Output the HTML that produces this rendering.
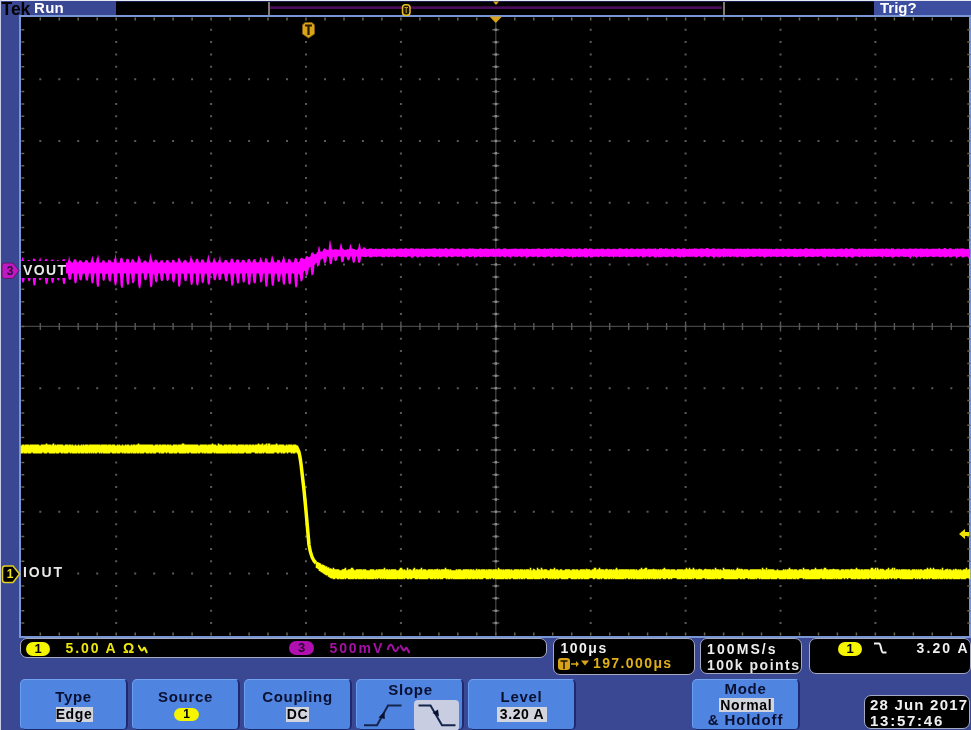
<!DOCTYPE html>
<html><head><meta charset="utf-8">
<style>
*{margin:0;padding:0;box-sizing:border-box}
html,body{width:971px;height:730px;overflow:hidden;background:#3a4894}
body{position:relative;font-family:"Liberation Sans",sans-serif;font-weight:bold}
.a{position:absolute;white-space:nowrap}
svg{position:absolute;left:0;top:0}
.sb{position:absolute;background:#000;border:1.5px solid #a4aac2;border-radius:7px}
.t{position:absolute;white-space:nowrap;font-size:14px;line-height:16px}
.btn{position:absolute;top:679px;height:51px;width:108px;background:#5084e1;border-radius:5px;border-top:1.5px solid #72a4f2;border-left:1px solid #68a0f4;border-right:2px solid #1e2a6e;border-bottom:1px solid #1c2a6a}
.bt{position:absolute;white-space:nowrap;font-size:15px;line-height:16px;color:#0a1030;text-align:center;letter-spacing:0.7px}
.hl{position:absolute;background:#d2d4de;color:#000;font-size:14px;line-height:15px;text-align:center;letter-spacing:0.6px}
</style></head><body><div id="wrap" style="position:absolute;left:0;top:0;width:971px;height:730px;overflow:hidden;filter:blur(0.6px)">
<div class="a" style="left:0;top:0;width:971px;height:1px;background:#e6e8f2"></div>
<div class="a" style="left:0;top:0;width:1px;height:730px;background:#c8cce4"></div>
<div class="a" style="left:116px;top:1px;width:758px;height:14px;background:#000;border-top:1px solid #1a2050"></div>
<div class="a" style="left:874px;top:1px;width:97px;height:14px;background:#3d4ea0"></div>
<div class="a" style="left:19px;top:15px;width:952px;height:623px;background:#000;border:2px solid #7896d4"></div>
<div class="a" style="left:1.5px;top:-1.5px;font-weight:bold;font-size:17.5px;line-height:20px;color:#000;letter-spacing:0px">Tek</div>
<div class="t" style="left:34px;top:0px;font-size:15px;color:#fff;letter-spacing:0.3px">Run</div>
<div class="t" style="left:880px;top:0px;font-size:15px;color:#fff">Trig?</div>

<svg width="971" height="730" viewBox="0 0 971 730">
<!-- record bar -->
<rect x="270" y="6.3" width="452" height="2.7" fill="#4c0c5c"/>
<path d="M269 2V15 M724 2V15" stroke="#a09a8c" stroke-width="1.6"/>
<path d="M493 1.5H499L496 5Z" fill="#e0a818"/>
<path d="M115.2 28.8h2v2h-2zM115.2 41.1h2v2h-2zM115.2 53.5h2v2h-2zM115.2 65.8h2v2h-2zM115.2 78.2h2v2h-2zM115.2 90.6h2v2h-2zM115.2 102.9h2v2h-2zM115.2 115.3h2v2h-2zM115.2 127.6h2v2h-2zM115.2 140h2v2h-2zM115.2 152.4h2v2h-2zM115.2 164.7h2v2h-2zM115.2 177.1h2v2h-2zM115.2 189.4h2v2h-2zM115.2 201.8h2v2h-2zM115.2 214.2h2v2h-2zM115.2 226.5h2v2h-2zM115.2 238.9h2v2h-2zM115.2 251.2h2v2h-2zM115.2 263.6h2v2h-2zM115.2 276h2v2h-2zM115.2 288.3h2v2h-2zM115.2 300.7h2v2h-2zM115.2 313h2v2h-2zM115.2 325.4h2v2h-2zM115.2 337.8h2v2h-2zM115.2 350.1h2v2h-2zM115.2 362.5h2v2h-2zM115.2 374.8h2v2h-2zM115.2 387.2h2v2h-2zM115.2 399.6h2v2h-2zM115.2 411.9h2v2h-2zM115.2 424.3h2v2h-2zM115.2 436.6h2v2h-2zM115.2 449h2v2h-2zM115.2 461.4h2v2h-2zM115.2 473.7h2v2h-2zM115.2 486.1h2v2h-2zM115.2 498.4h2v2h-2zM115.2 510.8h2v2h-2zM115.2 523.2h2v2h-2zM115.2 535.5h2v2h-2zM115.2 547.9h2v2h-2zM115.2 560.2h2v2h-2zM115.2 572.6h2v2h-2zM115.2 585h2v2h-2zM115.2 597.3h2v2h-2zM115.2 609.7h2v2h-2zM115.2 622h2v2h-2zM210.1 28.8h2v2h-2zM210.1 41.1h2v2h-2zM210.1 53.5h2v2h-2zM210.1 65.8h2v2h-2zM210.1 78.2h2v2h-2zM210.1 90.6h2v2h-2zM210.1 102.9h2v2h-2zM210.1 115.3h2v2h-2zM210.1 127.6h2v2h-2zM210.1 140h2v2h-2zM210.1 152.4h2v2h-2zM210.1 164.7h2v2h-2zM210.1 177.1h2v2h-2zM210.1 189.4h2v2h-2zM210.1 201.8h2v2h-2zM210.1 214.2h2v2h-2zM210.1 226.5h2v2h-2zM210.1 238.9h2v2h-2zM210.1 251.2h2v2h-2zM210.1 263.6h2v2h-2zM210.1 276h2v2h-2zM210.1 288.3h2v2h-2zM210.1 300.7h2v2h-2zM210.1 313h2v2h-2zM210.1 325.4h2v2h-2zM210.1 337.8h2v2h-2zM210.1 350.1h2v2h-2zM210.1 362.5h2v2h-2zM210.1 374.8h2v2h-2zM210.1 387.2h2v2h-2zM210.1 399.6h2v2h-2zM210.1 411.9h2v2h-2zM210.1 424.3h2v2h-2zM210.1 436.6h2v2h-2zM210.1 449h2v2h-2zM210.1 461.4h2v2h-2zM210.1 473.7h2v2h-2zM210.1 486.1h2v2h-2zM210.1 498.4h2v2h-2zM210.1 510.8h2v2h-2zM210.1 523.2h2v2h-2zM210.1 535.5h2v2h-2zM210.1 547.9h2v2h-2zM210.1 560.2h2v2h-2zM210.1 572.6h2v2h-2zM210.1 585h2v2h-2zM210.1 597.3h2v2h-2zM210.1 609.7h2v2h-2zM210.1 622h2v2h-2zM305 28.8h2v2h-2zM305 41.1h2v2h-2zM305 53.5h2v2h-2zM305 65.8h2v2h-2zM305 78.2h2v2h-2zM305 90.6h2v2h-2zM305 102.9h2v2h-2zM305 115.3h2v2h-2zM305 127.6h2v2h-2zM305 140h2v2h-2zM305 152.4h2v2h-2zM305 164.7h2v2h-2zM305 177.1h2v2h-2zM305 189.4h2v2h-2zM305 201.8h2v2h-2zM305 214.2h2v2h-2zM305 226.5h2v2h-2zM305 238.9h2v2h-2zM305 251.2h2v2h-2zM305 263.6h2v2h-2zM305 276h2v2h-2zM305 288.3h2v2h-2zM305 300.7h2v2h-2zM305 313h2v2h-2zM305 325.4h2v2h-2zM305 337.8h2v2h-2zM305 350.1h2v2h-2zM305 362.5h2v2h-2zM305 374.8h2v2h-2zM305 387.2h2v2h-2zM305 399.6h2v2h-2zM305 411.9h2v2h-2zM305 424.3h2v2h-2zM305 436.6h2v2h-2zM305 449h2v2h-2zM305 461.4h2v2h-2zM305 473.7h2v2h-2zM305 486.1h2v2h-2zM305 498.4h2v2h-2zM305 510.8h2v2h-2zM305 523.2h2v2h-2zM305 535.5h2v2h-2zM305 547.9h2v2h-2zM305 560.2h2v2h-2zM305 572.6h2v2h-2zM305 585h2v2h-2zM305 597.3h2v2h-2zM305 609.7h2v2h-2zM305 622h2v2h-2zM399.9 28.8h2v2h-2zM399.9 41.1h2v2h-2zM399.9 53.5h2v2h-2zM399.9 65.8h2v2h-2zM399.9 78.2h2v2h-2zM399.9 90.6h2v2h-2zM399.9 102.9h2v2h-2zM399.9 115.3h2v2h-2zM399.9 127.6h2v2h-2zM399.9 140h2v2h-2zM399.9 152.4h2v2h-2zM399.9 164.7h2v2h-2zM399.9 177.1h2v2h-2zM399.9 189.4h2v2h-2zM399.9 201.8h2v2h-2zM399.9 214.2h2v2h-2zM399.9 226.5h2v2h-2zM399.9 238.9h2v2h-2zM399.9 251.2h2v2h-2zM399.9 263.6h2v2h-2zM399.9 276h2v2h-2zM399.9 288.3h2v2h-2zM399.9 300.7h2v2h-2zM399.9 313h2v2h-2zM399.9 325.4h2v2h-2zM399.9 337.8h2v2h-2zM399.9 350.1h2v2h-2zM399.9 362.5h2v2h-2zM399.9 374.8h2v2h-2zM399.9 387.2h2v2h-2zM399.9 399.6h2v2h-2zM399.9 411.9h2v2h-2zM399.9 424.3h2v2h-2zM399.9 436.6h2v2h-2zM399.9 449h2v2h-2zM399.9 461.4h2v2h-2zM399.9 473.7h2v2h-2zM399.9 486.1h2v2h-2zM399.9 498.4h2v2h-2zM399.9 510.8h2v2h-2zM399.9 523.2h2v2h-2zM399.9 535.5h2v2h-2zM399.9 547.9h2v2h-2zM399.9 560.2h2v2h-2zM399.9 572.6h2v2h-2zM399.9 585h2v2h-2zM399.9 597.3h2v2h-2zM399.9 609.7h2v2h-2zM399.9 622h2v2h-2zM589.7 28.8h2v2h-2zM589.7 41.1h2v2h-2zM589.7 53.5h2v2h-2zM589.7 65.8h2v2h-2zM589.7 78.2h2v2h-2zM589.7 90.6h2v2h-2zM589.7 102.9h2v2h-2zM589.7 115.3h2v2h-2zM589.7 127.6h2v2h-2zM589.7 140h2v2h-2zM589.7 152.4h2v2h-2zM589.7 164.7h2v2h-2zM589.7 177.1h2v2h-2zM589.7 189.4h2v2h-2zM589.7 201.8h2v2h-2zM589.7 214.2h2v2h-2zM589.7 226.5h2v2h-2zM589.7 238.9h2v2h-2zM589.7 251.2h2v2h-2zM589.7 263.6h2v2h-2zM589.7 276h2v2h-2zM589.7 288.3h2v2h-2zM589.7 300.7h2v2h-2zM589.7 313h2v2h-2zM589.7 325.4h2v2h-2zM589.7 337.8h2v2h-2zM589.7 350.1h2v2h-2zM589.7 362.5h2v2h-2zM589.7 374.8h2v2h-2zM589.7 387.2h2v2h-2zM589.7 399.6h2v2h-2zM589.7 411.9h2v2h-2zM589.7 424.3h2v2h-2zM589.7 436.6h2v2h-2zM589.7 449h2v2h-2zM589.7 461.4h2v2h-2zM589.7 473.7h2v2h-2zM589.7 486.1h2v2h-2zM589.7 498.4h2v2h-2zM589.7 510.8h2v2h-2zM589.7 523.2h2v2h-2zM589.7 535.5h2v2h-2zM589.7 547.9h2v2h-2zM589.7 560.2h2v2h-2zM589.7 572.6h2v2h-2zM589.7 585h2v2h-2zM589.7 597.3h2v2h-2zM589.7 609.7h2v2h-2zM589.7 622h2v2h-2zM684.6 28.8h2v2h-2zM684.6 41.1h2v2h-2zM684.6 53.5h2v2h-2zM684.6 65.8h2v2h-2zM684.6 78.2h2v2h-2zM684.6 90.6h2v2h-2zM684.6 102.9h2v2h-2zM684.6 115.3h2v2h-2zM684.6 127.6h2v2h-2zM684.6 140h2v2h-2zM684.6 152.4h2v2h-2zM684.6 164.7h2v2h-2zM684.6 177.1h2v2h-2zM684.6 189.4h2v2h-2zM684.6 201.8h2v2h-2zM684.6 214.2h2v2h-2zM684.6 226.5h2v2h-2zM684.6 238.9h2v2h-2zM684.6 251.2h2v2h-2zM684.6 263.6h2v2h-2zM684.6 276h2v2h-2zM684.6 288.3h2v2h-2zM684.6 300.7h2v2h-2zM684.6 313h2v2h-2zM684.6 325.4h2v2h-2zM684.6 337.8h2v2h-2zM684.6 350.1h2v2h-2zM684.6 362.5h2v2h-2zM684.6 374.8h2v2h-2zM684.6 387.2h2v2h-2zM684.6 399.6h2v2h-2zM684.6 411.9h2v2h-2zM684.6 424.3h2v2h-2zM684.6 436.6h2v2h-2zM684.6 449h2v2h-2zM684.6 461.4h2v2h-2zM684.6 473.7h2v2h-2zM684.6 486.1h2v2h-2zM684.6 498.4h2v2h-2zM684.6 510.8h2v2h-2zM684.6 523.2h2v2h-2zM684.6 535.5h2v2h-2zM684.6 547.9h2v2h-2zM684.6 560.2h2v2h-2zM684.6 572.6h2v2h-2zM684.6 585h2v2h-2zM684.6 597.3h2v2h-2zM684.6 609.7h2v2h-2zM684.6 622h2v2h-2zM779.5 28.8h2v2h-2zM779.5 41.1h2v2h-2zM779.5 53.5h2v2h-2zM779.5 65.8h2v2h-2zM779.5 78.2h2v2h-2zM779.5 90.6h2v2h-2zM779.5 102.9h2v2h-2zM779.5 115.3h2v2h-2zM779.5 127.6h2v2h-2zM779.5 140h2v2h-2zM779.5 152.4h2v2h-2zM779.5 164.7h2v2h-2zM779.5 177.1h2v2h-2zM779.5 189.4h2v2h-2zM779.5 201.8h2v2h-2zM779.5 214.2h2v2h-2zM779.5 226.5h2v2h-2zM779.5 238.9h2v2h-2zM779.5 251.2h2v2h-2zM779.5 263.6h2v2h-2zM779.5 276h2v2h-2zM779.5 288.3h2v2h-2zM779.5 300.7h2v2h-2zM779.5 313h2v2h-2zM779.5 325.4h2v2h-2zM779.5 337.8h2v2h-2zM779.5 350.1h2v2h-2zM779.5 362.5h2v2h-2zM779.5 374.8h2v2h-2zM779.5 387.2h2v2h-2zM779.5 399.6h2v2h-2zM779.5 411.9h2v2h-2zM779.5 424.3h2v2h-2zM779.5 436.6h2v2h-2zM779.5 449h2v2h-2zM779.5 461.4h2v2h-2zM779.5 473.7h2v2h-2zM779.5 486.1h2v2h-2zM779.5 498.4h2v2h-2zM779.5 510.8h2v2h-2zM779.5 523.2h2v2h-2zM779.5 535.5h2v2h-2zM779.5 547.9h2v2h-2zM779.5 560.2h2v2h-2zM779.5 572.6h2v2h-2zM779.5 585h2v2h-2zM779.5 597.3h2v2h-2zM779.5 609.7h2v2h-2zM779.5 622h2v2h-2zM874.4 28.8h2v2h-2zM874.4 41.1h2v2h-2zM874.4 53.5h2v2h-2zM874.4 65.8h2v2h-2zM874.4 78.2h2v2h-2zM874.4 90.6h2v2h-2zM874.4 102.9h2v2h-2zM874.4 115.3h2v2h-2zM874.4 127.6h2v2h-2zM874.4 140h2v2h-2zM874.4 152.4h2v2h-2zM874.4 164.7h2v2h-2zM874.4 177.1h2v2h-2zM874.4 189.4h2v2h-2zM874.4 201.8h2v2h-2zM874.4 214.2h2v2h-2zM874.4 226.5h2v2h-2zM874.4 238.9h2v2h-2zM874.4 251.2h2v2h-2zM874.4 263.6h2v2h-2zM874.4 276h2v2h-2zM874.4 288.3h2v2h-2zM874.4 300.7h2v2h-2zM874.4 313h2v2h-2zM874.4 325.4h2v2h-2zM874.4 337.8h2v2h-2zM874.4 350.1h2v2h-2zM874.4 362.5h2v2h-2zM874.4 374.8h2v2h-2zM874.4 387.2h2v2h-2zM874.4 399.6h2v2h-2zM874.4 411.9h2v2h-2zM874.4 424.3h2v2h-2zM874.4 436.6h2v2h-2zM874.4 449h2v2h-2zM874.4 461.4h2v2h-2zM874.4 473.7h2v2h-2zM874.4 486.1h2v2h-2zM874.4 498.4h2v2h-2zM874.4 510.8h2v2h-2zM874.4 523.2h2v2h-2zM874.4 535.5h2v2h-2zM874.4 547.9h2v2h-2zM874.4 560.2h2v2h-2zM874.4 572.6h2v2h-2zM874.4 585h2v2h-2zM874.4 597.3h2v2h-2zM874.4 609.7h2v2h-2zM874.4 622h2v2h-2zM39.3 78.2h2v2h-2zM58.3 78.2h2v2h-2zM77.2 78.2h2v2h-2zM96.2 78.2h2v2h-2zM134.2 78.2h2v2h-2zM153.2 78.2h2v2h-2zM172.1 78.2h2v2h-2zM191.1 78.2h2v2h-2zM229.1 78.2h2v2h-2zM248.1 78.2h2v2h-2zM267 78.2h2v2h-2zM286 78.2h2v2h-2zM324 78.2h2v2h-2zM343 78.2h2v2h-2zM361.9 78.2h2v2h-2zM380.9 78.2h2v2h-2zM418.9 78.2h2v2h-2zM437.9 78.2h2v2h-2zM456.8 78.2h2v2h-2zM475.8 78.2h2v2h-2zM513.8 78.2h2v2h-2zM532.8 78.2h2v2h-2zM551.7 78.2h2v2h-2zM570.7 78.2h2v2h-2zM608.7 78.2h2v2h-2zM627.7 78.2h2v2h-2zM646.6 78.2h2v2h-2zM665.6 78.2h2v2h-2zM703.6 78.2h2v2h-2zM722.6 78.2h2v2h-2zM741.5 78.2h2v2h-2zM760.5 78.2h2v2h-2zM798.5 78.2h2v2h-2zM817.5 78.2h2v2h-2zM836.4 78.2h2v2h-2zM855.4 78.2h2v2h-2zM893.4 78.2h2v2h-2zM912.4 78.2h2v2h-2zM931.3 78.2h2v2h-2zM950.3 78.2h2v2h-2zM39.3 140h2v2h-2zM58.3 140h2v2h-2zM77.2 140h2v2h-2zM96.2 140h2v2h-2zM134.2 140h2v2h-2zM153.2 140h2v2h-2zM172.1 140h2v2h-2zM191.1 140h2v2h-2zM229.1 140h2v2h-2zM248.1 140h2v2h-2zM267 140h2v2h-2zM286 140h2v2h-2zM324 140h2v2h-2zM343 140h2v2h-2zM361.9 140h2v2h-2zM380.9 140h2v2h-2zM418.9 140h2v2h-2zM437.9 140h2v2h-2zM456.8 140h2v2h-2zM475.8 140h2v2h-2zM513.8 140h2v2h-2zM532.8 140h2v2h-2zM551.7 140h2v2h-2zM570.7 140h2v2h-2zM608.7 140h2v2h-2zM627.7 140h2v2h-2zM646.6 140h2v2h-2zM665.6 140h2v2h-2zM703.6 140h2v2h-2zM722.6 140h2v2h-2zM741.5 140h2v2h-2zM760.5 140h2v2h-2zM798.5 140h2v2h-2zM817.5 140h2v2h-2zM836.4 140h2v2h-2zM855.4 140h2v2h-2zM893.4 140h2v2h-2zM912.4 140h2v2h-2zM931.3 140h2v2h-2zM950.3 140h2v2h-2zM39.3 201.8h2v2h-2zM58.3 201.8h2v2h-2zM77.2 201.8h2v2h-2zM96.2 201.8h2v2h-2zM134.2 201.8h2v2h-2zM153.2 201.8h2v2h-2zM172.1 201.8h2v2h-2zM191.1 201.8h2v2h-2zM229.1 201.8h2v2h-2zM248.1 201.8h2v2h-2zM267 201.8h2v2h-2zM286 201.8h2v2h-2zM324 201.8h2v2h-2zM343 201.8h2v2h-2zM361.9 201.8h2v2h-2zM380.9 201.8h2v2h-2zM418.9 201.8h2v2h-2zM437.9 201.8h2v2h-2zM456.8 201.8h2v2h-2zM475.8 201.8h2v2h-2zM513.8 201.8h2v2h-2zM532.8 201.8h2v2h-2zM551.7 201.8h2v2h-2zM570.7 201.8h2v2h-2zM608.7 201.8h2v2h-2zM627.7 201.8h2v2h-2zM646.6 201.8h2v2h-2zM665.6 201.8h2v2h-2zM703.6 201.8h2v2h-2zM722.6 201.8h2v2h-2zM741.5 201.8h2v2h-2zM760.5 201.8h2v2h-2zM798.5 201.8h2v2h-2zM817.5 201.8h2v2h-2zM836.4 201.8h2v2h-2zM855.4 201.8h2v2h-2zM893.4 201.8h2v2h-2zM912.4 201.8h2v2h-2zM931.3 201.8h2v2h-2zM950.3 201.8h2v2h-2zM39.3 263.6h2v2h-2zM58.3 263.6h2v2h-2zM77.2 263.6h2v2h-2zM96.2 263.6h2v2h-2zM134.2 263.6h2v2h-2zM153.2 263.6h2v2h-2zM172.1 263.6h2v2h-2zM191.1 263.6h2v2h-2zM229.1 263.6h2v2h-2zM248.1 263.6h2v2h-2zM267 263.6h2v2h-2zM286 263.6h2v2h-2zM324 263.6h2v2h-2zM343 263.6h2v2h-2zM361.9 263.6h2v2h-2zM380.9 263.6h2v2h-2zM418.9 263.6h2v2h-2zM437.9 263.6h2v2h-2zM456.8 263.6h2v2h-2zM475.8 263.6h2v2h-2zM513.8 263.6h2v2h-2zM532.8 263.6h2v2h-2zM551.7 263.6h2v2h-2zM570.7 263.6h2v2h-2zM608.7 263.6h2v2h-2zM627.7 263.6h2v2h-2zM646.6 263.6h2v2h-2zM665.6 263.6h2v2h-2zM703.6 263.6h2v2h-2zM722.6 263.6h2v2h-2zM741.5 263.6h2v2h-2zM760.5 263.6h2v2h-2zM798.5 263.6h2v2h-2zM817.5 263.6h2v2h-2zM836.4 263.6h2v2h-2zM855.4 263.6h2v2h-2zM893.4 263.6h2v2h-2zM912.4 263.6h2v2h-2zM931.3 263.6h2v2h-2zM950.3 263.6h2v2h-2zM39.3 387.2h2v2h-2zM58.3 387.2h2v2h-2zM77.2 387.2h2v2h-2zM96.2 387.2h2v2h-2zM134.2 387.2h2v2h-2zM153.2 387.2h2v2h-2zM172.1 387.2h2v2h-2zM191.1 387.2h2v2h-2zM229.1 387.2h2v2h-2zM248.1 387.2h2v2h-2zM267 387.2h2v2h-2zM286 387.2h2v2h-2zM324 387.2h2v2h-2zM343 387.2h2v2h-2zM361.9 387.2h2v2h-2zM380.9 387.2h2v2h-2zM418.9 387.2h2v2h-2zM437.9 387.2h2v2h-2zM456.8 387.2h2v2h-2zM475.8 387.2h2v2h-2zM513.8 387.2h2v2h-2zM532.8 387.2h2v2h-2zM551.7 387.2h2v2h-2zM570.7 387.2h2v2h-2zM608.7 387.2h2v2h-2zM627.7 387.2h2v2h-2zM646.6 387.2h2v2h-2zM665.6 387.2h2v2h-2zM703.6 387.2h2v2h-2zM722.6 387.2h2v2h-2zM741.5 387.2h2v2h-2zM760.5 387.2h2v2h-2zM798.5 387.2h2v2h-2zM817.5 387.2h2v2h-2zM836.4 387.2h2v2h-2zM855.4 387.2h2v2h-2zM893.4 387.2h2v2h-2zM912.4 387.2h2v2h-2zM931.3 387.2h2v2h-2zM950.3 387.2h2v2h-2zM39.3 449h2v2h-2zM58.3 449h2v2h-2zM77.2 449h2v2h-2zM96.2 449h2v2h-2zM134.2 449h2v2h-2zM153.2 449h2v2h-2zM172.1 449h2v2h-2zM191.1 449h2v2h-2zM229.1 449h2v2h-2zM248.1 449h2v2h-2zM267 449h2v2h-2zM286 449h2v2h-2zM324 449h2v2h-2zM343 449h2v2h-2zM361.9 449h2v2h-2zM380.9 449h2v2h-2zM418.9 449h2v2h-2zM437.9 449h2v2h-2zM456.8 449h2v2h-2zM475.8 449h2v2h-2zM513.8 449h2v2h-2zM532.8 449h2v2h-2zM551.7 449h2v2h-2zM570.7 449h2v2h-2zM608.7 449h2v2h-2zM627.7 449h2v2h-2zM646.6 449h2v2h-2zM665.6 449h2v2h-2zM703.6 449h2v2h-2zM722.6 449h2v2h-2zM741.5 449h2v2h-2zM760.5 449h2v2h-2zM798.5 449h2v2h-2zM817.5 449h2v2h-2zM836.4 449h2v2h-2zM855.4 449h2v2h-2zM893.4 449h2v2h-2zM912.4 449h2v2h-2zM931.3 449h2v2h-2zM950.3 449h2v2h-2zM39.3 510.8h2v2h-2zM58.3 510.8h2v2h-2zM77.2 510.8h2v2h-2zM96.2 510.8h2v2h-2zM134.2 510.8h2v2h-2zM153.2 510.8h2v2h-2zM172.1 510.8h2v2h-2zM191.1 510.8h2v2h-2zM229.1 510.8h2v2h-2zM248.1 510.8h2v2h-2zM267 510.8h2v2h-2zM286 510.8h2v2h-2zM324 510.8h2v2h-2zM343 510.8h2v2h-2zM361.9 510.8h2v2h-2zM380.9 510.8h2v2h-2zM418.9 510.8h2v2h-2zM437.9 510.8h2v2h-2zM456.8 510.8h2v2h-2zM475.8 510.8h2v2h-2zM513.8 510.8h2v2h-2zM532.8 510.8h2v2h-2zM551.7 510.8h2v2h-2zM570.7 510.8h2v2h-2zM608.7 510.8h2v2h-2zM627.7 510.8h2v2h-2zM646.6 510.8h2v2h-2zM665.6 510.8h2v2h-2zM703.6 510.8h2v2h-2zM722.6 510.8h2v2h-2zM741.5 510.8h2v2h-2zM760.5 510.8h2v2h-2zM798.5 510.8h2v2h-2zM817.5 510.8h2v2h-2zM836.4 510.8h2v2h-2zM855.4 510.8h2v2h-2zM893.4 510.8h2v2h-2zM912.4 510.8h2v2h-2zM931.3 510.8h2v2h-2zM950.3 510.8h2v2h-2zM39.3 572.6h2v2h-2zM58.3 572.6h2v2h-2zM77.2 572.6h2v2h-2zM96.2 572.6h2v2h-2zM134.2 572.6h2v2h-2zM153.2 572.6h2v2h-2zM172.1 572.6h2v2h-2zM191.1 572.6h2v2h-2zM229.1 572.6h2v2h-2zM248.1 572.6h2v2h-2zM267 572.6h2v2h-2zM286 572.6h2v2h-2zM324 572.6h2v2h-2zM343 572.6h2v2h-2zM361.9 572.6h2v2h-2zM380.9 572.6h2v2h-2zM418.9 572.6h2v2h-2zM437.9 572.6h2v2h-2zM456.8 572.6h2v2h-2zM475.8 572.6h2v2h-2zM513.8 572.6h2v2h-2zM532.8 572.6h2v2h-2zM551.7 572.6h2v2h-2zM570.7 572.6h2v2h-2zM608.7 572.6h2v2h-2zM627.7 572.6h2v2h-2zM646.6 572.6h2v2h-2zM665.6 572.6h2v2h-2zM703.6 572.6h2v2h-2zM722.6 572.6h2v2h-2zM741.5 572.6h2v2h-2zM760.5 572.6h2v2h-2zM798.5 572.6h2v2h-2zM817.5 572.6h2v2h-2zM836.4 572.6h2v2h-2zM855.4 572.6h2v2h-2zM893.4 572.6h2v2h-2zM912.4 572.6h2v2h-2zM931.3 572.6h2v2h-2zM950.3 572.6h2v2h-2z" fill="#5a5a5a"/>
<path d="M495.8 17.4V635.4 M21.3 326.4H970.3" stroke="#444" stroke-width="1.3" fill="none"/>
<path d="M492.3 29.8h7M492.3 42.1h7M492.3 54.5h7M492.3 66.8h7M490.8 79.2h10M492.3 91.6h7M492.3 103.9h7M492.3 116.3h7M492.3 128.6h7M490.8 141h10M492.3 153.4h7M492.3 165.7h7M492.3 178.1h7M492.3 190.4h7M490.8 202.8h10M492.3 215.2h7M492.3 227.5h7M492.3 239.9h7M492.3 252.2h7M490.8 264.6h10M492.3 277h7M492.3 289.3h7M492.3 301.7h7M492.3 314h7M490.8 326.4h10M492.3 338.8h7M492.3 351.1h7M492.3 363.5h7M492.3 375.8h7M490.8 388.2h10M492.3 400.6h7M492.3 412.9h7M492.3 425.3h7M492.3 437.6h7M490.8 450h10M492.3 462.4h7M492.3 474.7h7M492.3 487.1h7M492.3 499.4h7M490.8 511.8h10M492.3 524.2h7M492.3 536.5h7M492.3 548.9h7M492.3 561.2h7M490.8 573.6h10M492.3 586h7M492.3 598.3h7M492.3 610.7h7M492.3 623h7M40.3 322.9v7M59.3 322.9v7M78.2 322.9v7M97.2 322.9v7M116.2 321.4v10M135.2 322.9v7M154.2 322.9v7M173.1 322.9v7M192.1 322.9v7M211.1 321.4v10M230.1 322.9v7M249.1 322.9v7M268 322.9v7M287 322.9v7M306 321.4v10M325 322.9v7M344 322.9v7M362.9 322.9v7M381.9 322.9v7M400.9 321.4v10M419.9 322.9v7M438.9 322.9v7M457.8 322.9v7M476.8 322.9v7M495.8 321.4v10M514.8 322.9v7M533.8 322.9v7M552.7 322.9v7M571.7 322.9v7M590.7 321.4v10M609.7 322.9v7M628.7 322.9v7M647.6 322.9v7M666.6 322.9v7M685.6 321.4v10M704.6 322.9v7M723.6 322.9v7M742.5 322.9v7M761.5 322.9v7M780.5 321.4v10M799.5 322.9v7M818.5 322.9v7M837.4 322.9v7M856.4 322.9v7M875.4 321.4v10M894.4 322.9v7M913.4 322.9v7M932.3 322.9v7M951.3 322.9v7" stroke="#585858" stroke-width="1.4" fill="none"/>
<path d="M40.3 17.4v3M40.3 635.4v-3M59.3 17.4v3M59.3 635.4v-3M78.2 17.4v3M78.2 635.4v-3M97.2 17.4v3M97.2 635.4v-3M116.2 17.4v3M116.2 635.4v-3M135.2 17.4v3M135.2 635.4v-3M154.2 17.4v3M154.2 635.4v-3M173.1 17.4v3M173.1 635.4v-3M192.1 17.4v3M192.1 635.4v-3M211.1 17.4v3M211.1 635.4v-3M230.1 17.4v3M230.1 635.4v-3M249.1 17.4v3M249.1 635.4v-3M268 17.4v3M268 635.4v-3M287 17.4v3M287 635.4v-3M306 17.4v3M306 635.4v-3M325 17.4v3M325 635.4v-3M344 17.4v3M344 635.4v-3M362.9 17.4v3M362.9 635.4v-3M381.9 17.4v3M381.9 635.4v-3M400.9 17.4v3M400.9 635.4v-3M419.9 17.4v3M419.9 635.4v-3M438.9 17.4v3M438.9 635.4v-3M457.8 17.4v3M457.8 635.4v-3M476.8 17.4v3M476.8 635.4v-3M495.8 17.4v3M495.8 635.4v-3M514.8 17.4v3M514.8 635.4v-3M533.8 17.4v3M533.8 635.4v-3M552.7 17.4v3M552.7 635.4v-3M571.7 17.4v3M571.7 635.4v-3M590.7 17.4v3M590.7 635.4v-3M609.7 17.4v3M609.7 635.4v-3M628.7 17.4v3M628.7 635.4v-3M647.6 17.4v3M647.6 635.4v-3M666.6 17.4v3M666.6 635.4v-3M685.6 17.4v3M685.6 635.4v-3M704.6 17.4v3M704.6 635.4v-3M723.6 17.4v3M723.6 635.4v-3M742.5 17.4v3M742.5 635.4v-3M761.5 17.4v3M761.5 635.4v-3M780.5 17.4v3M780.5 635.4v-3M799.5 17.4v3M799.5 635.4v-3M818.5 17.4v3M818.5 635.4v-3M837.4 17.4v3M837.4 635.4v-3M856.4 17.4v3M856.4 635.4v-3M875.4 17.4v3M875.4 635.4v-3M894.4 17.4v3M894.4 635.4v-3M913.4 17.4v3M913.4 635.4v-3M932.3 17.4v3M932.3 635.4v-3M951.3 17.4v3M951.3 635.4v-3M21.3 29.8h3M970.3 29.8h-3M21.3 42.1h3M970.3 42.1h-3M21.3 54.5h3M970.3 54.5h-3M21.3 66.8h3M970.3 66.8h-3M21.3 79.2h3M970.3 79.2h-3M21.3 91.6h3M970.3 91.6h-3M21.3 103.9h3M970.3 103.9h-3M21.3 116.3h3M970.3 116.3h-3M21.3 128.6h3M970.3 128.6h-3M21.3 141h3M970.3 141h-3M21.3 153.4h3M970.3 153.4h-3M21.3 165.7h3M970.3 165.7h-3M21.3 178.1h3M970.3 178.1h-3M21.3 190.4h3M970.3 190.4h-3M21.3 202.8h3M970.3 202.8h-3M21.3 215.2h3M970.3 215.2h-3M21.3 227.5h3M970.3 227.5h-3M21.3 239.9h3M970.3 239.9h-3M21.3 252.2h3M970.3 252.2h-3M21.3 264.6h3M970.3 264.6h-3M21.3 277h3M970.3 277h-3M21.3 289.3h3M970.3 289.3h-3M21.3 301.7h3M970.3 301.7h-3M21.3 314h3M970.3 314h-3M21.3 326.4h3M970.3 326.4h-3M21.3 338.8h3M970.3 338.8h-3M21.3 351.1h3M970.3 351.1h-3M21.3 363.5h3M970.3 363.5h-3M21.3 375.8h3M970.3 375.8h-3M21.3 388.2h3M970.3 388.2h-3M21.3 400.6h3M970.3 400.6h-3M21.3 412.9h3M970.3 412.9h-3M21.3 425.3h3M970.3 425.3h-3M21.3 437.6h3M970.3 437.6h-3M21.3 450h3M970.3 450h-3M21.3 462.4h3M970.3 462.4h-3M21.3 474.7h3M970.3 474.7h-3M21.3 487.1h3M970.3 487.1h-3M21.3 499.4h3M970.3 499.4h-3M21.3 511.8h3M970.3 511.8h-3M21.3 524.2h3M970.3 524.2h-3M21.3 536.5h3M970.3 536.5h-3M21.3 548.9h3M970.3 548.9h-3M21.3 561.2h3M970.3 561.2h-3M21.3 573.6h3M970.3 573.6h-3M21.3 586h3M970.3 586h-3M21.3 598.3h3M970.3 598.3h-3M21.3 610.7h3M970.3 610.7h-3M21.3 623h3M970.3 623h-3" stroke="#6a6650" stroke-width="1.5" fill="none"/>
<path d="M494.6 28.5h2.5v2.5h-2.5zM494.6 40.9h2.5v2.5h-2.5zM494.6 53.2h2.5v2.5h-2.5zM494.6 65.6h2.5v2.5h-2.5zM494.6 77.9h2.5v2.5h-2.5zM494.6 90.3h2.5v2.5h-2.5zM494.6 102.7h2.5v2.5h-2.5zM494.6 115h2.5v2.5h-2.5zM494.6 127.4h2.5v2.5h-2.5zM494.6 139.7h2.5v2.5h-2.5zM494.6 152.1h2.5v2.5h-2.5zM494.6 164.5h2.5v2.5h-2.5zM494.6 176.8h2.5v2.5h-2.5zM494.6 189.2h2.5v2.5h-2.5zM494.6 201.5h2.5v2.5h-2.5zM494.6 213.9h2.5v2.5h-2.5zM494.6 226.3h2.5v2.5h-2.5zM494.6 238.6h2.5v2.5h-2.5zM494.6 251h2.5v2.5h-2.5zM494.6 263.3h2.5v2.5h-2.5zM494.6 275.7h2.5v2.5h-2.5zM494.6 288.1h2.5v2.5h-2.5zM494.6 300.4h2.5v2.5h-2.5zM494.6 312.8h2.5v2.5h-2.5zM494.6 325.1h2.5v2.5h-2.5zM494.6 337.5h2.5v2.5h-2.5zM494.6 349.9h2.5v2.5h-2.5zM494.6 362.2h2.5v2.5h-2.5zM494.6 374.6h2.5v2.5h-2.5zM494.6 386.9h2.5v2.5h-2.5zM494.6 399.3h2.5v2.5h-2.5zM494.6 411.7h2.5v2.5h-2.5zM494.6 424h2.5v2.5h-2.5zM494.6 436.4h2.5v2.5h-2.5zM494.6 448.8h2.5v2.5h-2.5zM494.6 461.1h2.5v2.5h-2.5zM494.6 473.5h2.5v2.5h-2.5zM494.6 485.8h2.5v2.5h-2.5zM494.6 498.2h2.5v2.5h-2.5zM494.6 510.5h2.5v2.5h-2.5zM494.6 522.9h2.5v2.5h-2.5zM494.6 535.3h2.5v2.5h-2.5zM494.6 547.6h2.5v2.5h-2.5zM494.6 560h2.5v2.5h-2.5zM494.6 572.4h2.5v2.5h-2.5zM494.6 584.7h2.5v2.5h-2.5zM494.6 597.1h2.5v2.5h-2.5zM494.6 609.4h2.5v2.5h-2.5zM494.6 621.8h2.5v2.5h-2.5z" fill="#8a8a8a"/>
<polygon points="21,261 21.5,260.1 22,258.8 22.5,257.2 23,256.9 23.5,259.3 24,260.3 24.5,262.3 25,262.3 25.5,262.9 26,262.8 26.5,262.3 27,262.1 27.5,260.4 28,260.1 28.5,260 29,260.2 29.5,259.9 30,260.4 30.5,262 31,262.7 31.5,262.5 32,262.9 32.5,262.8 33,258.7 33.5,258.5 34,258.7 34.5,258.5 35,259.1 35.5,259.9 36,262.3 36.5,262.2 37,262.1 37.5,262.8 38,262.7 38.5,261 39,260.1 39.5,259.5 40,257.1 40.5,258 41,260.5 41.5,262 42,262.9 42.5,262.9 43,262.4 43.5,262.8 44,262.1 44.5,261 45,259.3 45.5,259.4 46,258.9 46.5,259.2 47,258.8 47.5,260.2 48,262.2 48.5,262.4 49,262.9 49.5,262.3 50,262.4 50.5,260.9 51,260.3 51.5,259.9 52,259.3 52.5,259.8 53,259.5 53.5,260.1 54,262.4 54.5,262.7 55,262.8 55.5,262.6 56,262 56.5,261.1 57,260.2 57.5,260.1 58,260 58.5,260.2 59,261 59.5,261.5 60,262.2 60.5,262.7 61,262.3 61.5,262.6 62,260.9 62.5,259.6 63,259.4 63.5,259.1 64,259.3 64.5,259.1 65,259.9 65.5,262.6 66,262.4 66.5,262.5 67,262.7 67.5,262.8 68,261 68.5,259.4 69,255.8 69.5,257.2 70,260.7 70.5,261 71,261.8 71.5,262.3 72,262.9 72.5,262.6 73,262.3 73.5,260.6 74,259.4 74.5,259.4 75,258.9 75.5,259.4 76,259.3 76.5,260.5 77,262.2 77.5,262.4 78,262.6 78.5,262.2 79,260.7 79.5,260.2 80,260.2 80.5,260.2 81,260.6 81.5,260.6 82,262 82.5,262.1 83,262.4 83.5,262.4 84,262.5 84.5,262.1 85,261.1 85.5,260 86,260.1 86.5,260 87,260.3 87.5,260.2 88,261.6 88.5,262.3 89,262.9 89.5,262.5 90,262.8 90.5,262.8 91,259.8 91.5,259.4 92,256.5 92.5,255.9 93,258.2 93.5,260.5 94,262.2 94.5,262.7 95,262.1 95.5,262.7 96,262.8 96.5,258.5 97,258.3 97.5,257 98,254.5 98.5,256 99,259.7 99.5,262.5 100,262.7 100.5,262.5 101,262.5 101.5,262.2 102,262.2 102.5,260.2 103,260.3 103.5,260.3 104,260.2 104.5,260.6 105,262.3 105.5,262.8 106,262.7 106.5,262.3 107,262.5 107.5,262.8 108,260.7 108.5,259.6 109,260.1 109.5,260.2 110,260.2 110.5,260.2 111,261.2 111.5,262.5 112,262.1 112.5,262.2 113,262.6 113.5,262.2 114,258.9 114.5,258.9 115,256.9 115.5,253.4 116,255.9 116.5,259.9 117,262.7 117.5,262.9 118,262.4 118.5,262.5 119,262.7 119.5,262.8 120,259.5 120.5,258.2 121,257.7 121.5,257.5 122,258 122.5,258.3 123,259.7 123.5,262.6 124,262.1 124.5,262.2 125,262.3 125.5,262.6 126,260.6 126.5,258.9 127,258.7 127.5,258.6 128,259.2 128.5,259 129,259.7 129.5,262.5 130,262.6 130.5,262.8 131,262.3 131.5,259.6 132,259.4 132.5,259 133,259 133.5,259.8 134,259.8 134.5,261.7 135,262.8 135.5,262.3 136,262.1 136.5,262.7 137,262.1 137.5,260.5 138,258.1 138.5,255.4 139,255.4 139.5,257.3 140,258.1 140.5,259.2 141,262.3 141.5,262.7 142,262.3 142.5,262.9 143,262.8 143.5,261 144,260.7 144.5,260.6 145,260.7 145.5,260.2 146,260.6 146.5,261.4 147,262.5 147.5,262.7 148,262.4 148.5,262.6 149,261 149.5,258.4 150,254.6 150.5,253.3 151,256.7 151.5,257.8 152,259.1 152.5,261.5 153,262.2 153.5,262.4 154,262.8 154.5,260 155,260.1 155.5,259.4 156,259.4 156.5,260 157,260.2 157.5,261.4 158,262.2 158.5,262.7 159,262.4 159.5,262.1 160,262.3 160.5,260.2 161,260.5 161.5,260.4 162,259.7 162.5,260.3 163,261 163.5,262.5 164,262.8 164.5,262.8 165,262.1 165.5,262.7 166,260.2 166.5,260.2 167,259.9 167.5,260 168,260 168.5,260.4 169,261.9 169.5,262.2 170,262.2 170.5,262.7 171,262.6 171.5,262.4 172,260.2 172.5,260 173,259.4 173.5,260 174,259.7 174.5,260.4 175,262.5 175.5,262.7 176,262.4 176.5,262.2 177,262.6 177.5,262.2 178,258.6 178.5,257.9 179,258.5 179.5,258 180,259 180.5,260.4 181,262.3 181.5,262.5 182,262.4 182.5,262.9 183,262.2 183.5,261.1 184,260.7 184.5,260.2 185,259.8 185.5,259.7 186,260 186.5,260.6 187,262.4 187.5,262.6 188,262.2 188.5,262.4 189,262.8 189.5,261.7 190,259.6 190.5,256.8 191,254.7 191.5,257.5 192,259.1 192.5,259.3 193,261 193.5,262.7 194,262.6 194.5,262.4 195,262.6 195.5,260.4 196,258.8 196.5,259 197,258.7 197.5,258.4 198,258.7 198.5,260.5 199,262.2 199.5,262.5 200,262.5 200.5,262.8 201,260.2 201.5,259.4 202,259.4 202.5,259.2 203,259.4 203.5,259.7 204,260.7 204.5,262.4 205,262.4 205.5,262.3 206,262.9 206.5,262.3 207,259.9 207.5,258.6 208,255.7 208.5,254.2 209,257.4 209.5,259.3 210,261.1 210.5,262.5 211,262.5 211.5,262.8 212,262.8 212.5,262.2 213,260.8 213.5,259.1 214,257.3 214.5,258.2 215,260.3 215.5,260.7 216,261.9 216.5,262.1 217,262.8 217.5,262.2 218,262.6 218.5,260 219,260.5 219.5,257.3 220,255.1 220.5,258.6 221,262 221.5,262.2 222,262.6 222.5,262.6 223,262.7 223.5,262.3 224,262 224.5,260.4 225,260 225.5,259.7 226,259.9 226.5,259.9 227,260.3 227.5,261.6 228,262.1 228.5,262.5 229,262.6 229.5,262.4 230,262.8 230.5,259.8 231,258.4 231.5,258.7 232,258.5 232.5,258.6 233,259.4 233.5,260.8 234,262.4 234.5,262.4 235,262.5 235.5,262.3 236,260.6 236.5,259.8 237,259.6 237.5,259.3 238,259.3 238.5,259.6 239,260.3 239.5,262.3 240,262.6 240.5,262.1 241,262.8 241.5,261.6 242,259.9 242.5,260 243,259.7 243.5,259.9 244,259.8 244.5,260.2 245,261.6 245.5,262.6 246,262.7 246.5,262.2 247,262.7 247.5,259.7 248,259.2 248.5,258.9 249,258.7 249.5,258.8 250,259.6 250.5,261 251,262.1 251.5,262.7 252,262.8 252.5,262.1 253,259.8 253.5,259.7 254,259.2 254.5,259.3 255,259 255.5,259.5 256,261.5 256.5,262.2 257,262.2 257.5,262.7 258,262.7 258.5,262.1 259,261.9 259.5,260.4 260,258.7 260.5,256.7 261,258 261.5,259.9 262,259.8 262.5,262 263,262.3 263.5,262.2 264,262.5 264.5,262.4 265,258.5 265.5,258 266,258.2 266.5,258.4 267,258.5 267.5,260.3 268,262.6 268.5,262.1 269,262.7 269.5,262.4 270,262.9 270.5,262.3 271,259.5 271.5,257.4 272,254.9 272.5,256.2 273,258.1 273.5,259 274,261 274.5,262.1 275,262.7 275.5,262.6 276,262.8 276.5,262.5 277,260.4 277.5,260 278,259.6 278.5,260.2 279,259.9 279.5,260.1 280,261.1 280.5,262.7 281,262.2 281.5,262.7 282,260.3 282.5,259.4 283,258.3 283.5,255.8 284,255.9 284.5,258.6 285,260.3 285.5,262.2 286,262.9 286.5,262.2 287,262.7 287.5,262.6 288,259.8 288.5,258.8 289,259.3 289.5,259.1 290,259.3 290.5,260 291,261.6 291.5,262.3 292,262.3 292.5,262.2 293,262.5 293.5,262.5 294,261.5 294.5,258.9 295,257.8 295.5,257.9 296,258.2 296.5,258.3 297,258.9 297.5,261.7 298,262.3 298.5,262.3 299,261.8 299.5,260.9 300,259.3 300.5,258.5 301,257.7 301.5,258.1 302,257.8 302.5,257.9 303,258.6 303.5,259.3 304,259.3 304.5,258.9 305,259 305.5,257.1 306,256.3 306.5,256.2 307,256.5 307.5,255.9 308,256.3 308.5,257.6 309,257 309.5,257.1 310,256.7 310.5,256.2 311,253.8 311.5,252.8 312,252.6 312.5,252.3 313,252.7 313.5,252.6 314,254.4 314.5,254.3 315,254.1 315.5,254.3 316,254 316.5,253.6 317,252.1 317.5,252.3 318,250.2 318.5,247 319,246 319.5,247 320,249.7 320.5,251.7 321,252 321.5,251.3 322,251.7 322.5,251.2 323,249.9 323.5,249.2 324,248.2 324.5,248.3 325,248.7 325.5,249 326,249.3 326.5,249.4 327,250 327.5,250 328,250 328.5,250 329,245.8 329.5,241.4 330,240 330.5,241.4 331,245.8 331.5,248.6 332,248.8 332.5,249.8 333,249.5 333.5,250.1 334,249.7 334.5,249 335,248.7 335.5,249.4 336,249.1 336.5,249.2 337,249.8 337.5,249.5 338,249.6 338.5,249.4 339,250 339.5,249.4 340,247 340.5,244 341,243 341.5,244 342,247 342.5,248.6 343,248.8 343.5,249.3 344,249.5 344.5,250 345,250.1 345.5,249.7 346,250.1 346.5,249.3 347,249.4 347.5,249 348,249.1 348.5,249.4 349,249.5 349.5,247.4 350,244.9 350.5,244 351,244.9 351.5,247.4 352,248.9 352.5,248.3 353,249 353.5,249 354,248.9 354.5,249.1 355,249.4 355.5,249.9 356,249.8 356.5,249.9 357,249.8 357.5,249.2 358,248.4 358.5,247 359,244 359.5,243 360,244 360.5,247 361,249.6 361.5,249.6 362,248.7 362.5,249.1 363,248.2 363.5,247.3 364,247 364.5,247.3 365,248.1 365.5,248.3 366,248.4 366.5,249 367,249.3 367.5,248.9 368,248.7 368.5,249.2 369,248.3 369.5,248.6 370,248.5 370.5,248.3 371,248.7 371.5,248.1 372,248.9 372.5,248.9 373,249.1 373.5,249 374,248.9 374.5,248.9 375,248.6 375.5,248.4 376,248.6 376.5,248.4 377,249 377.5,249.2 378,249.1 378.5,249.2 379,249 379.5,248.9 380,248.9 380.5,249 381,248.8 381.5,248.8 382,248.4 382.5,248.3 383,248.1 383.5,248.7 384,248.8 384.5,249.2 385,248.7 385.5,249 386,249.1 386.5,249.2 387,248.5 387.5,248.6 388,248.7 388.5,248.2 389,248.3 389.5,249 390,248.6 390.5,248.7 391,249 391.5,249.2 392,249.2 392.5,248.5 393,248.2 393.5,248.3 394,248.1 394.5,248.8 395,248.3 395.5,249.1 396,249.3 396.5,249.4 397,248.8 397.5,248.8 398,249 398.5,248.5 399,248.9 399.5,248.2 400,248.4 400.5,248.8 401,248.3 401.5,248.3 402,248.7 402.5,248.8 403,249 403.5,248.7 404,248.4 404.5,248.7 405,248.3 405.5,248.2 406,248.3 406.5,248.2 407,248.8 407.5,249.2 408,249.1 408.5,248.7 409,248.9 409.5,249 410,248.5 410.5,248.2 411,248.1 411.5,248.5 412,248 412.5,248.5 413,248.4 413.5,248.7 414,249.1 414.5,249.3 415,248.6 415.5,248.7 416,248.3 416.5,248.3 417,248.7 417.5,248.6 418,248.8 418.5,248.2 419,248.4 419.5,249.2 420,249.2 420.5,248.9 421,248.8 421.5,248.4 422,248.6 422.5,248.4 423,248.4 423.5,248.2 424,248.8 424.5,249 425,249 425.5,248.9 426,248.8 426.5,249.1 427,248.8 427.5,248.6 428,248.4 428.5,248.9 429,248.4 429.5,248.7 430,248.6 430.5,248.8 431,248.8 431.5,248.7 432,248.9 432.5,248.6 433,248.2 433.5,248.5 434,248.4 434.5,248 435,248.5 435.5,248.4 436,248.6 436.5,248.8 437,249.3 437.5,249.2 438,248.9 438.5,248.9 439,248.4 439.5,248.1 440,248.7 440.5,248.8 441,248.2 441.5,248.4 442,249 442.5,248.6 443,249.2 443.5,249.3 444,248.8 444.5,248.6 445,248.5 445.5,248 446,248.3 446.5,248 447,248.7 447.5,248.9 448,249.2 448.5,249.1 449,249.4 449.5,248.8 450,248.6 450.5,248.4 451,248.3 451.5,248.4 452,248 452.5,248.4 453,248.4 453.5,248.8 454,248.8 454.5,249 455,248.9 455.5,249.3 456,249 456.5,248.8 457,248.5 457.5,248.6 458,248.8 458.5,248.5 459,248.5 459.5,248.9 460,249.3 460.5,249.3 461,248.9 461.5,249.3 462,248.8 462.5,248.2 463,248.6 463.5,248.9 464,248.3 464.5,248.8 465,248.7 465.5,249 466,248.9 466.5,249 467,249.4 467.5,248.7 468,249 468.5,248.8 469,248.4 469.5,248.3 470,248.1 470.5,248.8 471,248.3 471.5,249 472,248.6 472.5,248.6 473,248.6 473.5,248.6 474,248.5 474.5,249.1 475,248.7 475.5,248.9 476,248.6 476.5,249.2 477,248.8 477.5,249 478,249 478.5,248.9 479,249 479.5,248.4 480,248.1 480.5,248.5 481,248.2 481.5,248.4 482,248.9 482.5,248.9 483,249.1 483.5,249.2 484,248.7 484.5,248.8 485,248.6 485.5,248.5 486,248.7 486.5,248.4 487,248.7 487.5,248.9 488,248.5 488.5,249 489,248.9 489.5,248.9 490,248.6 490.5,249.1 491,249.1 491.5,248.4 492,249.1 492.5,248.8 493,248.4 493.5,248.3 494,248.7 494.5,249 495,249.2 495.5,249.2 496,249.2 496.5,248.8 497,248.4 497.5,248.8 498,249.1 498.5,248.3 499,248.3 499.5,248.5 500,248.7 500.5,249.3 501,249.2 501.5,249 502,249.2 502.5,249.3 503,248.3 503.5,248.7 504,248.3 504.5,248.5 505,248.2 505.5,248.2 506,248.5 506.5,249.1 507,249.3 507.5,249.3 508,249 508.5,248.9 509,248.7 509.5,249 510,248.9 510.5,249 511,248.4 511.5,249.2 512,248.7 512.5,248.7 513,249.2 513.5,248.6 514,249 514.5,248.4 515,248.2 515.5,248.9 516,248.3 516.5,248.8 517,248.7 517.5,249 518,248.8 518.5,249.2 519,248.8 519.5,249 520,248.6 520.5,248.7 521,248.7 521.5,248.7 522,248.5 522.5,248.5 523,249.2 523.5,249.3 524,248.9 524.5,248.7 525,249.3 525.5,248.9 526,248.2 526.5,248.5 527,248.4 527.5,248.5 528,248.7 528.5,249.1 529,249.1 529.5,249.1 530,249 530.5,249 531,249.3 531.5,248.8 532,248.4 532.5,248.8 533,249 533.5,248.9 534,248.4 534.5,248.7 535,249 535.5,249.4 536,249 536.5,248.7 537,249 537.5,248.4 538,248.3 538.5,248.3 539,248.4 539.5,248.2 540,248.5 540.5,249.1 541,249 541.5,248.8 542,249.2 542.5,249.1 543,248.9 543.5,248.6 544,248.7 544.5,248.5 545,248.1 545.5,248.6 546,249 546.5,249 547,249.1 547.5,248.6 548,249.2 548.5,248.8 549,248.5 549.5,248.5 550,248.5 550.5,248.5 551,248.7 551.5,248.1 552,248.1 552.5,248.6 553,249.3 553.5,248.9 554,249.3 554.5,248.8 555,248.4 555.5,248.3 556,248.6 556.5,248.4 557,248.5 557.5,248.6 558,248.8 558.5,249.1 559,249 559.5,248.9 560,249.3 560.5,248.3 561,248.6 561.5,248.5 562,248.6 562.5,248.1 563,248.6 563.5,248.7 564,249.1 564.5,249.2 565,248.8 565.5,248.9 566,249.3 566.5,248.5 567,248.5 567.5,248.7 568,248.3 568.5,248.5 569,248.9 569.5,249.1 570,248.8 570.5,249 571,249 571.5,249 572,248.6 572.5,248.4 573,248.6 573.5,248.9 574,248.4 574.5,248.7 575,248.5 575.5,248.6 576,249.1 576.5,249 577,248.7 577.5,248.9 578,248.4 578.5,248.8 579,248.3 579.5,248.2 580,248.3 580.5,248.7 581,248.7 581.5,248.7 582,249 582.5,249.4 583,249.1 583.5,249.2 584,248.1 584.5,248.2 585,248.4 585.5,248.6 586,248.1 586.5,248.1 587,249.1 587.5,249 588,249.4 588.5,248.7 589,249.1 589.5,248.3 590,248.2 590.5,248.5 591,248.5 591.5,248.4 592,248.6 592.5,248.7 593,249.4 593.5,248.7 594,249.3 594.5,249.2 595,249.3 595.5,248.7 596,249 596.5,248.9 597,248.4 597.5,248.4 598,248.8 598.5,249 599,249.3 599.5,248.7 600,248.9 600.5,249.2 601,248.3 601.5,248.6 602,248.5 602.5,248.9 603,248.3 603.5,248.7 604,248.7 604.5,249.3 605,249.4 605.5,249.3 606,248.9 606.5,249 607,249 607.5,248.2 608,248.6 608.5,248.5 609,248.9 609.5,249 610,248.4 610.5,249.4 611,249.1 611.5,249.1 612,248.9 612.5,249.3 613,248.6 613.5,248.8 614,248.5 614.5,248.9 615,248.7 615.5,249 616,249.2 616.5,248.9 617,249.2 617.5,249.4 618,248.8 618.5,248.8 619,248.2 619.5,248.2 620,248.3 620.5,248.4 621,248.3 621.5,248.6 622,248.7 622.5,248.9 623,248.8 623.5,249.3 624,248.9 624.5,248.7 625,248.7 625.5,248.8 626,248.6 626.5,248.1 627,248.4 627.5,248.4 628,249.2 628.5,249.2 629,249.1 629.5,249.2 630,249.2 630.5,248.6 631,248.3 631.5,248.6 632,248.3 632.5,248.5 633,248.8 633.5,249.1 634,249.2 634.5,249.1 635,249.3 635.5,249.3 636,248.5 636.5,248.8 637,248.8 637.5,248.5 638,248.8 638.5,248.6 639,249.1 639.5,249.1 640,248.6 640.5,249.2 641,248.7 641.5,248.9 642,248.5 642.5,248.8 643,248.2 643.5,248.5 644,248.6 644.5,248.5 645,248.5 645.5,249.2 646,249.4 646.5,248.7 647,249.2 647.5,248.8 648,248.5 648.5,248.5 649,248.3 649.5,248.7 650,248.9 650.5,248.8 651,248.3 651.5,249.1 652,248.7 652.5,248.8 653,248.9 653.5,248.5 654,248.2 654.5,248.9 655,248.4 655.5,248.2 656,248.3 656.5,249.2 657,249.4 657.5,248.9 658,248.7 658.5,249.1 659,249.1 659.5,248.1 660,248 660.5,248.6 661,248.1 661.5,248.2 662,248.1 662.5,248.9 663,249 663.5,248.6 664,249.1 664.5,249.1 665,248.3 665.5,248.1 666,248.2 666.5,248.7 667,248 667.5,248.7 668,248.5 668.5,249.1 669,249.3 669.5,248.6 670,249.4 670.5,249.2 671,248.3 671.5,248.8 672,248.5 672.5,248.6 673,248.2 673.5,248.4 674,249.1 674.5,249.2 675,249.1 675.5,248.7 676,248.9 676.5,249.1 677,248.4 677.5,248.2 678,248.7 678.5,248.1 679,248.5 679.5,248.6 680,249 680.5,249.3 681,249.1 681.5,249.3 682,249 682.5,248.4 683,248.1 683.5,248.5 684,248.7 684.5,248.3 685,248.1 685.5,249.2 686,249.2 686.5,249 687,248.9 687.5,249 688,248.9 688.5,249.1 689,248.8 689.5,248.4 690,248.3 690.5,249.1 691,248.9 691.5,249.2 692,248.6 692.5,248.8 693,249.1 693.5,249.2 694,248.2 694.5,248.1 695,248.7 695.5,248.5 696,248.2 696.5,248.4 697,249 697.5,248.6 698,249.3 698.5,248.8 699,249.3 699.5,249.1 700,248.5 700.5,248.4 701,248.2 701.5,248.7 702,248.3 702.5,248.6 703,248.5 703.5,249.1 704,249.2 704.5,248.8 705,249.1 705.5,248.4 706,248.2 706.5,248 707,248 707.5,248.1 708,248 708.5,248.4 709,248.5 709.5,249.1 710,249.3 710.5,249 711,249.3 711.5,248.6 712,248.7 712.5,248.2 713,248.3 713.5,248.4 714,248.5 714.5,248.5 715,248.6 715.5,249.1 716,249.4 716.5,248.9 717,248.8 717.5,248.5 718,248.5 718.5,248.7 719,248.5 719.5,248.9 720,248.6 720.5,249.1 721,249.2 721.5,249 722,248.9 722.5,249.1 723,248.3 723.5,248.6 724,248.6 724.5,248.3 725,248.3 725.5,248.7 726,248.8 726.5,249 727,249.1 727.5,248.8 728,248.6 728.5,248.6 729,249.1 729.5,248.7 730,248.8 730.5,248.5 731,248.9 731.5,248.5 732,248.9 732.5,248.8 733,249 733.5,249.2 734,249.1 734.5,249 735,248.8 735.5,248.7 736,248.8 736.5,248.8 737,248.6 737.5,248.7 738,248.4 738.5,248.7 739,248.7 739.5,249.1 740,248.9 740.5,248.5 741,248.6 741.5,248.9 742,248.8 742.5,248.9 743,248.9 743.5,249 744,248.5 744.5,248.8 745,248.7 745.5,248.8 746,249.1 746.5,249 747,248.5 747.5,248.6 748,248.3 748.5,248.4 749,248.8 749.5,248.9 750,249.3 750.5,248.7 751,249.2 751.5,249.2 752,248.4 752.5,248.8 753,248.7 753.5,248.4 754,248.8 754.5,248.7 755,248.6 755.5,248.8 756,249.1 756.5,248.8 757,248.7 757.5,249.3 758,248.9 758.5,248.8 759,248.3 759.5,248.4 760,248.6 760.5,248.7 761,249.1 761.5,248.7 762,249 762.5,248.8 763,249.2 763.5,248.5 764,248.7 764.5,248.7 765,248.9 765.5,248.6 766,248.4 766.5,248.9 767,248.7 767.5,248.8 768,248.7 768.5,249 769,248.7 769.5,248.6 770,249.1 770.5,248.9 771,248.7 771.5,248.5 772,249 772.5,249.4 773,248.9 773.5,249 774,249.3 774.5,249.2 775,248.7 775.5,248.8 776,248.8 776.5,248.6 777,248.5 777.5,248.7 778,248.8 778.5,249.1 779,248.8 779.5,249.4 780,249.3 780.5,248.9 781,248.9 781.5,248.6 782,248.9 782.5,248.8 783,248.3 783.5,248.6 784,249 784.5,248.9 785,248.9 785.5,248.8 786,249.2 786.5,248.9 787,248.7 787.5,248.7 788,248.5 788.5,248.3 789,248.7 789.5,249 790,248.7 790.5,249.2 791,248.6 791.5,249.2 792,249 792.5,248.9 793,249 793.5,249 794,248.7 794.5,248.4 795,248.3 795.5,248.7 796,249.1 796.5,248.7 797,249.2 797.5,249.3 798,249 798.5,249.1 799,248.7 799.5,248.9 800,248.5 800.5,248.7 801,248.5 801.5,249.2 802,249 802.5,249.3 803,249.2 803.5,249.2 804,249.3 804.5,248.5 805,248.6 805.5,248.3 806,248.2 806.5,248.1 807,248.5 807.5,248.5 808,248.9 808.5,249 809,249 809.5,248.8 810,248.5 810.5,248.9 811,248.4 811.5,248.4 812,248.5 812.5,248.7 813,248.9 813.5,248.8 814,249.2 814.5,248.9 815,249.1 815.5,249.4 816,248.4 816.5,248.9 817,248.6 817.5,249 818,249 818.5,248.8 819,249.2 819.5,248.9 820,249 820.5,249.3 821,248.6 821.5,249.2 822,248.4 822.5,248.8 823,248.6 823.5,248.9 824,248.8 824.5,248.3 825,248.8 825.5,248.6 826,249.2 826.5,248.7 827,249.1 827.5,249.3 828,248.5 828.5,249 829,248.3 829.5,248.7 830,248.7 830.5,248.8 831,249.1 831.5,248.9 832,249.3 832.5,248.7 833,248.2 833.5,248.6 834,248.5 834.5,248.7 835,248.9 835.5,248.5 836,249.2 836.5,249.3 837,248.9 837.5,249.1 838,249 838.5,248.7 839,248.7 839.5,249.1 840,249 840.5,248.3 841,248.9 841.5,248.5 842,248.4 842.5,248.6 843,248.9 843.5,249.4 844,249.2 844.5,249.3 845,248.4 845.5,248.1 846,248.7 846.5,248 847,248.2 847.5,248.5 848,249.3 848.5,249 849,248.9 849.5,248.7 850,248.7 850.5,248.3 851,248.6 851.5,248.1 852,248.7 852.5,248.3 853,248 853.5,248.7 854,249 854.5,249.3 855,249 855.5,248.7 856,248.8 856.5,249.2 857,249 857.5,248.9 858,248.9 858.5,248.4 859,248.2 859.5,248.6 860,248.7 860.5,249 861,248.9 861.5,249.4 862,248.7 862.5,248.5 863,248.8 863.5,248.8 864,248.7 864.5,248.4 865,248.6 865.5,249 866,248.6 866.5,249.3 867,248.8 867.5,248.9 868,248.8 868.5,249.1 869,248.5 869.5,248.8 870,249.1 870.5,248.5 871,248.9 871.5,248.7 872,249.1 872.5,249 873,248.9 873.5,248.6 874,248.9 874.5,248.5 875,248.6 875.5,248.4 876,248.6 876.5,248.8 877,248.7 877.5,249.1 878,249 878.5,248.7 879,249.3 879.5,248.5 880,248.9 880.5,248.7 881,248.4 881.5,248.7 882,248.7 882.5,248.4 883,248.8 883.5,248.7 884,248.9 884.5,248.8 885,248.9 885.5,248.7 886,248.3 886.5,248.3 887,248.8 887.5,248.9 888,248.7 888.5,249.2 889,248.6 889.5,248.7 890,249.1 890.5,249.2 891,248.3 891.5,248 892,248.6 892.5,248.6 893,248.3 893.5,248.1 894,249.2 894.5,249.2 895,249.4 895.5,249.1 896,249 896.5,249 897,248.5 897.5,248.6 898,248.7 898.5,248.8 899,248.4 899.5,248.6 900,249.1 900.5,249.2 901,248.9 901.5,249.2 902,248.8 902.5,249.1 903,248.6 903.5,248.3 904,248.8 904.5,248.5 905,248.9 905.5,248.6 906,249 906.5,249.3 907,248.9 907.5,248.7 908,249.3 908.5,248.7 909,248.5 909.5,248.6 910,248.4 910.5,248.3 911,248.5 911.5,249.1 912,248.6 912.5,248.8 913,249.3 913.5,249.1 914,248.9 914.5,248.6 915,248.3 915.5,248.8 916,248.3 916.5,248.6 917,248.8 917.5,249 918,248.6 918.5,249.1 919,249 919.5,248.7 920,248.7 920.5,248.6 921,248.3 921.5,248.6 922,248.8 922.5,248.4 923,248.7 923.5,249.3 924,249.1 924.5,248.7 925,248.7 925.5,248.9 926,248.4 926.5,248.4 927,248.6 927.5,248.4 928,248.5 928.5,249 929,249.4 929.5,249 930,248.7 930.5,248.8 931,249.1 931.5,248.9 932,248.7 932.5,248.5 933,248.8 933.5,248.5 934,248.8 934.5,248.8 935,249.1 935.5,248.6 936,249.2 936.5,248.7 937,248.6 937.5,249 938,248.8 938.5,248.4 939,248.1 939.5,248.2 940,248.3 940.5,248.9 941,249.2 941.5,249.2 942,248.7 942.5,249.1 943,249.2 943.5,248.4 944,248.1 944.5,248.1 945,248.1 945.5,248.2 946,248 946.5,249 947,248.9 947.5,248.9 948,249.3 948.5,249.2 949,248.3 949.5,248.2 950,248.2 950.5,248.3 951,248.2 951.5,248.6 952,249.2 952.5,249.2 953,248.9 953.5,248.8 954,249 954.5,249.3 955,248.7 955.5,248.6 956,248.5 956.5,248.8 957,248.6 957.5,248.2 958,248.6 958.5,248.8 959,248.7 959.5,248.7 960,248.7 960.5,248.6 961,248.6 961.5,248.4 962,248.5 962.5,248.3 963,248.5 963.5,248.8 964,248.4 964.5,249.3 965,248.7 965.5,249 966,249.3 966.5,248.9 967,248.9 967.5,248.7 968,248.8 968.5,248.9 969,248.6 969.5,248.5 970,248.9 970,257.2 969.5,256.8 969,257.2 968.5,259 968,256.7 967.5,256.7 967,256.5 966.5,256.8 966,256.5 965.5,256.4 965,256.9 964.5,256.7 964,257.2 963.5,257.4 963,256.7 962.5,258.3 962,257.2 961.5,256.7 961,256.2 960.5,256.3 960,256.8 959.5,256.5 959,257 958.5,257.1 958,257.1 957.5,257.5 957,257.3 956.5,258.5 956,258.8 955.5,256.6 955,256.6 954.5,256.4 954,256.2 953.5,256.2 953,256.6 952.5,256.6 952,256.9 951.5,257.4 951,257.6 950.5,257 950,257.4 949.5,257.4 949,257.3 948.5,256.3 948,256.5 947.5,256.5 947,256.9 946.5,257.1 946,257.6 945.5,257.5 945,257.2 944.5,257.6 944,257.5 943.5,256.6 943,256.5 942.5,256.8 942,256.8 941.5,256.7 941,256.8 940.5,257.5 940,257.5 939.5,256.9 939,256.8 938.5,256.8 938,256.7 937.5,256.7 937,256.8 936.5,256.8 936,256.3 935.5,256.8 935,256.4 934.5,257.2 934,257.1 933.5,256.9 933,257.1 932.5,257 932,256.9 931.5,256.5 931,256.2 930.5,256.6 930,256.6 929.5,256.5 929,256.8 928.5,256.7 928,257.4 927.5,257 927,257.3 926.5,257.1 926,257 925.5,256.4 925,256.6 924.5,256.9 924,256.6 923.5,256.6 923,257.2 922.5,257 922,257 921.5,257 921,256.6 920.5,258.1 920,256.9 919.5,256.3 919,256.4 918.5,256.7 918,256.6 917.5,257.1 917,257.4 916.5,258.6 916,257.5 915.5,256.9 915,257 914.5,256.4 914,256.6 913.5,257.9 913,256.3 912.5,256.3 912,256.6 911.5,257 911,257.5 910.5,258.8 910,258.7 909.5,257.4 909,257.3 908.5,257.2 908,256.4 907.5,256.3 907,256.9 906.5,256.6 906,257.2 905.5,256.7 905,257.1 904.5,256.8 904,257.3 903.5,257.2 903,256.2 902.5,256.6 902,256.7 901.5,256.7 901,256.3 900.5,256.3 900,257.1 899.5,256.8 899,257.3 898.5,257.2 898,256.8 897.5,257.1 897,256.8 896.5,256.6 896,256.4 895.5,256.3 895,256.6 894.5,256.9 894,257 893.5,257.2 893,259 892.5,257.5 892,257.5 891.5,256.9 891,257.3 890.5,256.4 890,256.7 889.5,256.4 889,256.7 888.5,256.9 888,256.7 887.5,257 887,256.9 886.5,257.2 886,257 885.5,257.2 885,256.2 884.5,256.4 884,256.3 883.5,256.6 883,256.7 882.5,258.9 882,257 881.5,257.1 881,256.8 880.5,256.7 880,257 879.5,256.1 879,256.7 878.5,256.3 878,256.8 877.5,256.4 877,256.7 876.5,256.7 876,257 875.5,257.1 875,256.8 874.5,256.6 874,256.6 873.5,256.4 873,258 872.5,256.6 872,256.7 871.5,256.2 871,257 870.5,257.1 870,257 869.5,257.3 869,256.7 868.5,256.6 868,256.5 867.5,256.9 867,256.8 866.5,256.2 866,256.6 865.5,257.2 865,256.8 864.5,257.5 864,256.8 863.5,257.5 863,257.1 862.5,256.5 862,256.1 861.5,256.3 861,256.6 860.5,257 860,257.4 859.5,257.5 859,257 858.5,256.8 858,257 857.5,256.7 857,256.5 856.5,256.6 856,256.4 855.5,256.5 855,256.4 854.5,256.2 854,257.2 853.5,257.5 853,257.8 852.5,257.7 852,257.7 851.5,257.7 851,257 850.5,256.9 850,256.5 849.5,256.8 849,256.8 848.5,256.7 848,256.6 847.5,257 847,259.1 846.5,257.5 846,257.4 845.5,257.5 845,256.7 844.5,256.4 844,256.7 843.5,256.4 843,257 842.5,257 842,257 841.5,257.2 841,256.9 840.5,256.8 840,256.5 839.5,256.6 839,256.7 838.5,256.8 838,256.3 837.5,256.2 837,256.7 836.5,257 836,257.2 835.5,257 835,257.4 834.5,257 834,257.2 833.5,256.6 833,257 832.5,256.4 832,256.5 831.5,257 831,257.1 830.5,257.1 830,256.7 829.5,256.7 829,256.8 828.5,257.1 828,256.4 827.5,256.4 827,256.9 826.5,256.2 826,256.6 825.5,257.9 825,258.9 824.5,257.3 824,257.3 823.5,257 823,257.4 822.5,257.2 822,256.4 821.5,256.2 821,256.3 820.5,256.2 820,256.3 819.5,256.4 819,256.4 818.5,256.8 818,257.1 817.5,256.9 817,257 816.5,256.6 816,256.6 815.5,256.5 815,256.6 814.5,256.8 814,256.9 813.5,257 813,257.1 812.5,257.1 812,256.8 811.5,257 811,257.1 810.5,256.9 810,256.2 809.5,256.6 809,256.9 808.5,256.5 808,256.8 807.5,256.9 807,257.2 806.5,257.1 806,257.6 805.5,257.5 805,257.4 804.5,256.4 804,256.1 803.5,256.3 803,256.7 802.5,256.3 802,256.2 801.5,256.4 801,256.7 800.5,256.9 800,256.7 799.5,256.9 799,256.6 798.5,256.8 798,256.8 797.5,257.8 797,256.8 796.5,257.1 796,257.1 795.5,256.8 795,257.1 794.5,257 794,257.4 793.5,256.9 793,256.3 792.5,256.3 792,256.8 791.5,256.4 791,256.6 790.5,256.4 790,256.8 789.5,257.1 789,256.9 788.5,257 788,257.2 787.5,257.1 787,256.6 786.5,256.7 786,256.3 785.5,256.2 785,256.1 784.5,256.6 784,257.2 783.5,256.9 783,257.3 782.5,257.1 782,256.7 781.5,257.1 781,256.4 780.5,256.8 780,256.3 779.5,256.7 779,256.8 778.5,256.8 778,257.1 777.5,256.8 777,256.8 776.5,257.2 776,257.2 775.5,256.5 775,257 774.5,256.4 774,256.4 773.5,256.9 773,256.3 772.5,256.4 772,256.6 771.5,256.9 771,257.3 770.5,257.2 770,256.6 769.5,256.5 769,256.7 768.5,256.8 768,256.2 767.5,256.7 767,256.9 766.5,256.5 766,257.2 765.5,257.2 765,257.4 764.5,258.4 764,256.7 763.5,257.3 763,256.7 762.5,256.4 762,256.3 761.5,256.2 761,256.8 760.5,257 760,256.7 759.5,257.3 759,256.6 758.5,256.6 758,256.6 757.5,256.7 757,256.3 756.5,256.6 756,256.8 755.5,256.6 755,256.9 754.5,257 754,256.8 753.5,257.1 753,257.1 752.5,256.8 752,257.1 751.5,256.2 751,256.3 750.5,256.7 750,256.5 749.5,256.5 749,257 748.5,257 748,256.6 747.5,256.9 747,257 746.5,257.3 746,256.4 745.5,256.3 745,258.2 744.5,257.7 744,256.8 743.5,257 743,257 742.5,256.8 742,257.3 741.5,257 741,257.1 740.5,256.6 740,256.2 739.5,256.4 739,256.6 738.5,256.8 738,258.5 737.5,257 737,257.1 736.5,257.6 736,257 735.5,256.8 735,256.2 734.5,256.6 734,258.2 733.5,256.6 733,256.6 732.5,256.4 732,256.6 731.5,256.6 731,257.3 730.5,257.1 730,257 729.5,257.2 729,257 728.5,256.3 728,256.8 727.5,256.9 727,256.8 726.5,256.4 726,256.6 725.5,257.4 725,256.8 724.5,256.8 724,257.3 723.5,256.9 723,258.6 722.5,256.1 722,256.4 721.5,256.3 721,256.7 720.5,257.2 720,257.5 719.5,256.9 719,258.8 718.5,257.1 718,256.6 717.5,257.8 717,256.6 716.5,256.8 716,256.7 715.5,256.3 715,257.1 714.5,257.5 714,258.9 713.5,258.6 713,257 712.5,257 712,256.5 711.5,256.8 711,256.3 710.5,256.3 710,256.2 709.5,256.9 709,256.9 708.5,257.7 708,257 707.5,257.2 707,257.1 706.5,257.2 706,256.5 705.5,256.6 705,256.5 704.5,256.4 704,256.3 703.5,256.9 703,257 702.5,257.1 702,257.5 701.5,257 701,258.4 700.5,257 700,256.2 699.5,256.6 699,256.2 698.5,256.1 698,256.7 697.5,257.1 697,257.1 696.5,257.6 696,257.3 695.5,257.1 695,257.5 694.5,256.9 694,256.3 693.5,256.3 693,256.6 692.5,256.9 692,256.7 691.5,256.6 691,257.1 690.5,256.7 690,256.7 689.5,256.8 689,257.3 688.5,256.7 688,256.6 687.5,256.9 687,256.6 686.5,256.2 686,256.9 685.5,256.9 685,257 684.5,257.1 684,257.7 683.5,257.6 683,257.1 682.5,256.7 682,256.7 681.5,256.2 681,256.8 680.5,258.2 680,257.3 679.5,257.3 679,257.2 678.5,257.4 678,256.8 677.5,257.2 677,256.7 676.5,256.8 676,256.2 675.5,256.9 675,256.3 674.5,256.5 674,256.6 673.5,258.6 673,256.8 672.5,257.3 672,257.4 671.5,256.7 671,257.1 670.5,256.2 670,256.7 669.5,256.7 669,256.3 668.5,257.1 668,257.5 667.5,256.9 667,257 666.5,257.4 666,257.2 665.5,256.9 665,257 664.5,256.7 664,256.7 663.5,256.5 663,256.2 662.5,257.3 662,257.2 661.5,257.1 661,257.2 660.5,257.4 660,257.2 659.5,257.2 659,256.7 658.5,257.9 658,256.1 657.5,256.7 657,256.5 656.5,257.2 656,258.5 655.5,257.3 655,257.5 654.5,257.5 654,257.3 653.5,256.5 653,256.8 652.5,256.1 652,256.6 651.5,256.6 651,257.3 650.5,256.8 650,257.4 649.5,257.5 649,256.9 648.5,256.7 648,256.7 647.5,256.4 647,256.5 646.5,256.5 646,256.2 645.5,257.2 645,257.4 644.5,257.1 644,257.3 643.5,257.1 643,258.8 642.5,257.2 642,256.7 641.5,256.4 641,256.3 640.5,256.1 640,256.5 639.5,256.4 639,258.2 638.5,257.1 638,257.3 637.5,256.7 637,257.1 636.5,256.6 636,256.7 635.5,256.6 635,256.8 634.5,256.7 634,256.8 633.5,256.7 633,257.1 632.5,257 632,256.9 631.5,257.2 631,257.3 630.5,257.1 630,256.7 629.5,256.7 629,256.9 628.5,256.2 628,257.1 627.5,256.8 627,257.6 626.5,257.5 626,257 625.5,257.2 625,256.7 624.5,256.5 624,256.2 623.5,256.6 623,256.8 622.5,256.9 622,256.4 621.5,256.8 621,257 620.5,257.5 620,256.8 619.5,257.4 619,257.1 618.5,257 618,256.2 617.5,256.7 617,256.6 616.5,256.9 616,256.5 615.5,257.1 615,256.7 614.5,256.7 614,256.7 613.5,258.7 613,257.1 612.5,256.6 612,256.9 611.5,256.8 611,256.4 610.5,256.6 610,257.1 609.5,257.3 609,257 608.5,256.7 608,257.3 607.5,256.6 607,256.3 606.5,256.9 606,256.5 605.5,256.6 605,256.4 604.5,256.2 604,257 603.5,257.1 603,256.8 602.5,257.1 602,256.8 601.5,257 601,256.5 600.5,256.1 600,256.6 599.5,256.6 599,257.1 598.5,257.2 598,257.2 597.5,257 597,256.7 596.5,256.7 596,256.5 595.5,256.9 595,256.7 594.5,256.6 594,256.7 593.5,256.8 593,257.2 592.5,257.2 592,257.7 591.5,257.2 591,257.8 590.5,257.4 590,257.5 589.5,256.3 589,256.2 588.5,256.3 588,256.4 587.5,258.4 587,257 586.5,257.4 586,257.5 585.5,257.6 585,257.2 584.5,257.6 584,256.8 583.5,256.2 583,256.7 582.5,256.5 582,258.3 581.5,256.3 581,256.8 580.5,257.1 580,257.1 579.5,257.1 579,256.8 578.5,257.3 578,257.2 577.5,256.6 577,256.6 576.5,256.2 576,258 575.5,257 575,256.8 574.5,256.9 574,257.1 573.5,257.3 573,257.4 572.5,258.7 572,256.8 571.5,256.2 571,256.8 570.5,256.8 570,256.7 569.5,257.4 569,256.8 568.5,257.2 568,257 567.5,256.8 567,256.5 566.5,256.7 566,256.4 565.5,256.5 565,256.3 564.5,256.1 564,256.6 563.5,257.1 563,257.7 562.5,257.1 562,257.1 561.5,257.2 561,257.1 560.5,256.9 560,256.2 559.5,256.6 559,256.8 558.5,256.5 558,256.8 557.5,257 557,257.3 556.5,257 556,257.1 555.5,257.4 555,257.1 554.5,256.3 554,256.7 553.5,256.1 553,256.7 552.5,257 552,257.8 551.5,257.3 551,257.6 550.5,257.3 550,257.3 549.5,256.5 549,256.2 548.5,256.2 548,256.7 547.5,256.6 547,256.7 546.5,256.5 546,257.2 545.5,257.4 545,257.3 544.5,257.5 544,257.1 543.5,257 543,257.2 542.5,256.8 542,256.4 541.5,256.4 541,256.4 540.5,256.7 540,257 539.5,257.2 539,256.9 538.5,257.3 538,257.2 537.5,258.4 537,256.3 536.5,256.6 536,256.7 535.5,256.7 535,256.3 534.5,257.1 534,256.7 533.5,257.2 533,256.6 532.5,257.2 532,257.1 531.5,256.8 531,256.5 530.5,256.3 530,256.7 529.5,256.3 529,256.5 528.5,257.2 528,257.2 527.5,257.6 527,257.8 526.5,257.7 526,259.2 525.5,256.6 525,256.1 524.5,256.8 524,256.3 523.5,256.6 523,256.6 522.5,257 522,257.5 521.5,257 521,257.5 520.5,257 520,256.2 519.5,256.4 519,256.2 518.5,256.3 518,256.9 517.5,257.2 517,256.7 516.5,256.8 516,257 515.5,256.7 515,257.4 514.5,256.8 514,256.1 513.5,256.3 513,256.8 512.5,256.4 512,256.3 511.5,256.6 511,258.8 510.5,258.3 510,256.7 509.5,256.9 509,257.2 508.5,256.7 508,256.8 507.5,256.3 507,256.3 506.5,256.6 506,257.6 505.5,257.5 505,257.3 504.5,257.1 504,257.6 503.5,256.7 503,256.6 502.5,256.2 502,256.5 501.5,256.6 501,256.3 500.5,257.7 500,256.5 499.5,257.3 499,256.9 498.5,256.6 498,256.7 497.5,257.1 497,256.4 496.5,256.5 496,256.9 495.5,256.7 495,256.5 494.5,257 494,257 493.5,257.2 493,256.7 492.5,256.8 492,256.5 491.5,256.9 491,256.3 490.5,256.4 490,256.4 489.5,256.6 489,256.7 488.5,257.2 488,257 487.5,256.9 487,256.7 486.5,257.2 486,257.2 485.5,256.7 485,256.3 484.5,257.8 484,256.5 483.5,256.4 483,257 482.5,256.7 482,257 481.5,257.3 481,256.8 480.5,257.2 480,257.4 479.5,256.7 479,256.4 478.5,256.4 478,256.4 477.5,256.6 477,256.8 476.5,257.2 476,256.7 475.5,257 475,257.1 474.5,258.8 474,256.9 473.5,256.5 473,256.2 472.5,256.5 472,256.6 471.5,257 471,257.1 470.5,257.3 470,257.1 469.5,257.6 469,256.9 468.5,257 468,256.1 467.5,256.5 467,256.1 466.5,256.7 466,256.2 465.5,256.3 465,257 464.5,258.2 464,257.1 463.5,257.3 463,257.4 462.5,257.2 462,257.3 461.5,256.2 461,256.7 460.5,256.2 460,256.6 459.5,257.1 459,256.8 458.5,256.7 458,256.7 457.5,257.3 457,256.8 456.5,256.6 456,256.2 455.5,256.5 455,256.2 454.5,256.6 454,256.6 453.5,256.9 453,256.9 452.5,257 452,257.1 451.5,257.4 451,257.4 450.5,256.8 450,256.3 449.5,256.4 449,256.5 448.5,256.3 448,256.7 447.5,257.8 447,257.8 446.5,257.3 446,257.3 445.5,257.2 445,257.3 444.5,256.4 444,256.6 443.5,256.7 443,256.1 442.5,256.5 442,257.1 441.5,257.3 441,257.1 440.5,257.3 440,257.4 439.5,257.3 439,257.4 438.5,256.4 438,256.2 437.5,256.8 437,256.8 436.5,256.2 436,257.2 435.5,257 435,257.6 434.5,257.6 434,257 433.5,256.9 433,257.1 432.5,256.9 432,256.2 431.5,256.4 431,256.7 430.5,256.2 430,256.7 429.5,257.1 429,257.1 428.5,257 428,257 427.5,256.7 427,256.6 426.5,256.3 426,256.2 425.5,256.4 425,256.3 424.5,257.2 424,257.4 423.5,257.5 423,257.3 422.5,256.9 422,257.5 421.5,257.4 421,256.2 420.5,256.7 420,256.2 419.5,256.5 419,256.9 418.5,257.4 418,257.4 417.5,258.5 417,256.9 416.5,257.3 416,256.5 415.5,256.3 415,256.1 414.5,256.7 414,256.2 413.5,257.4 413,257.5 412.5,257.6 412,258.8 411.5,257.7 411,257.3 410.5,256.7 410,256.2 409.5,256.4 409,256.6 408.5,256.2 408,256.3 407.5,256.6 407,257.2 406.5,257.6 406,257.2 405.5,257.7 405,257.1 404.5,257.2 404,257.2 403.5,256.4 403,256.8 402.5,256.8 402,257.1 401.5,257.2 401,257 400.5,257 400,256.8 399.5,257.1 399,256.7 398.5,256.4 398,256.7 397.5,256.3 397,256.4 396.5,256.5 396,256.5 395.5,256.9 395,256.8 394.5,257.2 394,257.5 393.5,257.2 393,257.4 392.5,256.5 392,256.4 391.5,257.6 391,256.8 390.5,256.2 390,256.7 389.5,257.3 389,257.3 388.5,257.2 388,257.3 387.5,256.8 387,257.1 386.5,256.6 386,256.6 385.5,256.3 385,256.4 384.5,257.4 384,257.4 383.5,257.3 383,257.1 382.5,257.3 382,257.3 381.5,257.2 381,256.5 380.5,256.2 380,256.9 379.5,256.4 379,256.5 378.5,256.5 378,256.6 377.5,256.6 377,256.8 376.5,257.4 376,256.7 375.5,256.8 375,256.9 374.5,256.7 374,256.5 373.5,256.7 373,256.4 372.5,256.7 372,257.5 371.5,257.5 371,257.1 370.5,257.6 370,257.6 369.5,257.6 369,257.1 368.5,256.2 368,256.3 367.5,256.5 367,256.7 366.5,256.8 366,257.6 365.5,257.3 365,257.1 364.5,257.1 364,256.9 363.5,256.8 363,256.7 362.5,256.6 362,256.5 361.5,256.3 361,257.9 360.5,261.2 360,262.4 359.5,262.8 359,262.9 358.5,262.8 358,262 357.5,258.4 357,256.4 356.5,256.3 356,256.8 355.5,258.4 355,261.5 354.5,262.2 354,263 353.5,262.9 353,262.8 352.5,261.2 352,257.9 351.5,256.2 351,256.4 350.5,256.4 350,258.5 349.5,259.6 349,260.3 348.5,260.4 348,260.4 347.5,259.8 347,259 346.5,257 346,256.5 345.5,256.4 345,256.9 344.5,256.2 344,259.4 343.5,262 343,262.1 342.5,262.1 342,262.5 341.5,261.9 341,261 340.5,256.3 340,256.5 339.5,256.6 339,256.3 338.5,256.2 338,256.8 337.5,257.6 337,260 336.5,260.5 336,261 335.5,261 335,261.2 334.5,260.3 334,256.7 333.5,256.8 333,256.7 332.5,258.9 332,263 331.5,264.3 331,264.1 330.5,264.7 330,264.1 329.5,262.9 329,258.1 328.5,256.8 328,256.4 327.5,256.1 327,256.4 326.5,260.5 326,262.5 325.5,263 325,262.6 324.5,263.6 324,263 323.5,261.1 323,258.6 322.5,258.4 322,258.9 321.5,259.4 321,259.8 320.5,259.7 320,262.5 319.5,264.5 319,265.6 318.5,265.8 318,266.3 317.5,267 317,266.3 316.5,262.6 316,263.1 315.5,263.3 315,264.2 314.5,264.7 314,271.2 313.5,273.9 313,274.6 312.5,275 312,275.4 311.5,275.2 311,272 310.5,266.7 310,267.1 309.5,267.7 309,267.9 308.5,270.6 308,273.8 307.5,274.6 307,275.4 306.5,275.8 306,275.9 305.5,274.6 305,270.5 304.5,270.9 304,271.3 303.5,272.7 303,278.2 302.5,280.6 302,280.8 301.5,281.7 301,281.3 300.5,281.3 300,277.7 299.5,274.3 299,275.3 298.5,273.4 298,274.2 297.5,284.1 297,286.5 296.5,287.3 296,287.8 295.5,287.3 295,286 294.5,279.7 294,273.2 293.5,273.9 293,273.8 292.5,273.1 292,273.2 291.5,274.9 291,282.2 290.5,284.2 290,284.3 289.5,284.2 289,284.2 288.5,283.1 288,277.3 287.5,273.4 287,273.2 286.5,273.6 286,273.4 285.5,278.4 285,283.4 284.5,284.7 284,284.9 283.5,284.5 283,284.3 282.5,281.7 282,274.4 281.5,273.3 281,273.7 280.5,276 280,280.6 279.5,281.5 279,282 278.5,281.7 278,281.9 277.5,280.5 277,275.3 276.5,273.8 276,273.7 275.5,273.3 275,273.8 274.5,277.5 274,283.9 273.5,285.7 273,285.7 272.5,285.7 272,285.9 271.5,283.6 271,277.1 270.5,273.3 270,273.8 269.5,273.6 269,273.8 268.5,273.9 268,279.9 267.5,285.4 267,286.8 266.5,286.6 266,286.8 265.5,286.3 265,283 264.5,273.6 264,273.1 263.5,273.8 263,274.5 262.5,279.8 262,282.1 261.5,282 261,282.7 260.5,282.6 260,281.4 259.5,277 259,273.8 258.5,273.7 258,273.2 257.5,273.3 257,273.1 256.5,274.1 256,281.2 255.5,283.4 255,283.3 254.5,283.5 254,283.3 253.5,282.5 253,278.7 252.5,273.4 252,273.5 251.5,273.6 251,274.9 250.5,282.2 250,284.8 249.5,284.8 249,284.8 248.5,284.5 248,283.4 247.5,277.9 247,273.8 246.5,273.1 246,273.2 245.5,275.2 245,280.3 244.5,282.3 244,282.6 243.5,282.6 243,282.6 242.5,281.2 242,276.5 241.5,273.3 241,273.5 240.5,273.7 240,273.7 239.5,279 239,282.4 238.5,283.6 238,283.9 237.5,283.3 237,282.8 236.5,280 236,273.5 235.5,273.4 235,273.7 234.5,273.5 234,278 233.5,283.8 233,285.1 232.5,285.7 232,286.1 231.5,285.7 231,283.2 230.5,276.2 230,273.2 229.5,273.4 229,273.8 228.5,273.6 228,275.2 227.5,280 227,281.3 226.5,281.3 226,281.2 225.5,281.1 225,280.1 224.5,276.8 224,273.7 223.5,273.7 223,273.8 222.5,273.8 222,273.7 221.5,275.2 221,279 220.5,279.8 220,280.5 219.5,280 219,279.9 218.5,279.5 218,273.1 217.5,273.8 217,273.7 216.5,275.8 216,279.3 215.5,280 215,280.4 214.5,280.3 214,279.9 213.5,279.2 213,275 212.5,273.3 212,273.3 211.5,273.4 211,273.2 210.5,277 210,282.9 209.5,284.4 209,284.9 208.5,284.6 208,284.3 207.5,282.5 207,275.7 206.5,273.7 206,273.5 205.5,273.7 205,273.3 204.5,276.7 204,281.3 203.5,282.7 203,282.7 202.5,283.4 202,283 201.5,281.2 201,276.1 200.5,273.5 200,273.6 199.5,273.7 199,279.6 198.5,284.1 198,285.5 197.5,285.4 197,285.7 196.5,284.6 196,281.9 195.5,273.8 195,273.4 194.5,273.5 194,273.3 193.5,275.5 193,282.1 192.5,284.5 192,284.8 191.5,285 191,284.8 190.5,283.5 190,277.7 189.5,273.7 189,273.4 188.5,273.7 188,273.6 187.5,273.5 187,278.7 186.5,281.1 186,280.9 185.5,281.1 185,281.4 184.5,280.6 184,278.1 183.5,273.4 183,273.9 182.5,273.7 182,273.3 181.5,273.2 181,277 180.5,284.1 180,286.8 179.5,286.7 179,286.7 178.5,286.5 178,284.5 177.5,273.5 177,273.7 176.5,273.8 176,273.4 175.5,273.6 175,278.5 174.5,281.5 174,282.7 173.5,282.5 173,282.2 172.5,281.5 172,279.2 171.5,273.4 171,273.4 170.5,273.7 170,273.7 169.5,274.7 169,279 168.5,280.3 168,281.1 167.5,281 167,280.7 166.5,280 166,276.4 165.5,273.9 165,273.3 164.5,273.2 164,273.2 163.5,276.7 163,280.2 162.5,281.1 162,280.9 161.5,281.1 161,280.7 160.5,278.9 160,273.7 159.5,273.3 159,273.4 158.5,273.3 158,275.5 157.5,280.4 157,282.3 156.5,282.5 156,281.9 155.5,281.8 155,281.1 154.5,276.4 154,273.8 153.5,273.8 153,274.9 152.5,283.9 152,286.8 151.5,286.9 151,287 150.5,287.4 150,285.1 149.5,279.8 149,273.6 148.5,273.3 148,273.7 147.5,273.8 147,277 146.5,279.8 146,280.2 145.5,280.5 145,280 144.5,279.7 144,278.6 143.5,273.5 143,273.1 142.5,273.3 142,273.6 141.5,273.5 141,282.9 140.5,287.1 140,288.5 139.5,288.5 139,287.8 138.5,286.7 138,282.1 137.5,273.5 137,273.8 136.5,273.7 136,273.8 135.5,273.3 135,274 134.5,280.8 134,282.9 133.5,282.9 133,283.3 132.5,283.3 132,281.8 131.5,277.9 131,273.8 130.5,273.7 130,273.5 129.5,279.6 129,283.9 128.5,284.5 128,285 127.5,284.9 127,283.8 126.5,281.3 126,273.5 125.5,273.3 125,273.6 124.5,273.4 124,273.4 123.5,279 123,285.7 122.5,288.1 122,288 121.5,287.7 121,287.1 120.5,284.7 120,275.9 119.5,273.3 119,273.1 118.5,273.2 118,273.7 117.5,273.6 117,280.6 116.5,284.3 116,285.6 115.5,285.5 115,285.2 114.5,284.2 114,280.6 113.5,273.7 113,273.8 112.5,273.8 112,273.2 111.5,275.5 111,279.9 110.5,281.8 110,281.4 109.5,281.5 109,281.2 108.5,280.1 108,276.3 107.5,273.2 107,273.9 106.5,273.9 106,273.8 105.5,274.4 105,278.6 104.5,280.4 104,280.5 103.5,281.1 103,280.4 102.5,279.5 102,273.5 101.5,273.4 101,273.2 100.5,273.2 100,273.7 99.5,278.8 99,285.2 98.5,286.7 98,287.1 97.5,287 97,286.3 96.5,283.7 96,273.2 95.5,273.1 95,273.5 94.5,273.8 94,278.6 93.5,282.4 93,283.3 92.5,283.2 92,283.7 91.5,282.7 91,280 90.5,273.6 90,273.4 89.5,273.1 89,273.9 88.5,276 88,279.9 87.5,280.4 87,280.9 86.5,280.4 86,280.3 85.5,279 85,274.9 84.5,273.5 84,273.2 83.5,273.8 83,273.8 82.5,274.8 82,278.5 81.5,279.9 81,280.8 80.5,280.3 80,280.3 79.5,279.7 79,276.1 78.5,273.7 78,273.2 77.5,273.5 77,279.2 76.5,282.8 76,283.3 75.5,283.3 75,283.4 74.5,282.6 74,279.8 73.5,273.3 73,273.4 72.5,273.6 72,273.2 71.5,275.9 71,278.9 70.5,279.8 70,280.1 69.5,279.8 69,279.7 68.5,279 68,275.2 67.5,273.2 67,273.6 66.5,273.3 66,273.9 65.5,279.5 65,283.6 64.5,283.9 64,283.9 63.5,284 63,283.3 62.5,280.1 62,273.8 61.5,273.6 61,273.4 60.5,273.5 60,275.1 59.5,278.5 59,280.5 58.5,280.6 58,280.3 57.5,279.8 57,279.3 56.5,275.3 56,273.4 55.5,273.4 55,273.7 54.5,273.7 54,279.8 53.5,282.4 53,282.7 52.5,283.3 52,282.8 51.5,281.6 51,278.5 50.5,273.7 50,273.3 49.5,273.7 49,273.6 48.5,273.3 48,281.3 47.5,283.6 47,284.1 46.5,284.1 46,284.6 45.5,282.9 45,279.2 44.5,273.8 44,273.5 43.5,273.4 43,273.8 42.5,273.3 42,273.2 41.5,278 41,279.6 40.5,280.2 40,280.3 39.5,280 39,280 38.5,277.1 38,273.9 37.5,273.8 37,273.4 36.5,273.1 36,279.8 35.5,284 35,285.7 34.5,285.4 34,285.2 33.5,285.2 33,282.2 32.5,273.3 32,273.3 31.5,273.3 31,274.2 30.5,278.8 30,280.7 29.5,280.7 29,281.4 28.5,280.8 28,280.2 27.5,276.5 27,273.7 26.5,273.3 26,273.5 25.5,273.6 25,273.5 24.5,279 24,281.8 23.5,282.6 23,282.2 22.5,282.7 22,281.6 21.5,278.5 21,273.8" fill="#ff00ff"/>
<path d="M21.5 445.5V453.5M22.5 444.5V453.5M23.5 444.5V452.5M24.5 445.5V453.5M25.5 444.5V453.5M26.5 444.5V453.5M27.5 444.5V452.5M28.5 444.5V453.5M29.5 445.5V453.5M30.5 444.5V453.5M31.5 444.5V452.5M32.5 444.5V452.5M33.5 444.5V453.5M34.5 444.5V453.5M35.5 444.5V453.5M36.5 444.5V453.5M37.5 444.5V453.5M38.5 444.5V453.5M39.5 445.5V453.5M40.5 445.5V453.5M41.5 444.5V453.5M42.5 444.5V452.5M43.5 444.5V452.5M44.5 444.5V453.5M45.5 444.5V453.5M46.5 443.5V453.5M47.5 444.5V452.5M48.5 444.5V452.5M49.5 444.5V453.5M50.5 444.5V453.5M51.5 445.5V453.5M52.5 444.5V453.5M53.5 443.5V453.5M54.5 445.5V453.5M55.5 444.5V452.5M56.5 445.5V453.5M57.5 444.5V453.5M58.5 444.5V453.5M59.5 444.5V452.5M60.5 444.5V452.5M61.5 444.5V453.5M62.5 444.5V453.5M63.5 445.5V452.5M64.5 445.5V453.5M65.5 444.5V453.5M66.5 444.5V453.5M67.5 444.5V453.5M68.5 445.5V452.5M69.5 444.5V452.5M70.5 444.5V453.5M71.5 445.5V452.5M72.5 444.5V453.5M73.5 445.5V453.5M74.5 445.5V453.5M75.5 444.5V453.5M76.5 445.5V453.5M77.5 445.5V452.5M78.5 444.5V453.5M79.5 445.5V453.5M80.5 445.5V452.5M81.5 444.5V453.5M82.5 445.5V453.5M83.5 444.5V453.5M84.5 445.5V452.5M85.5 444.5V453.5M86.5 444.5V453.5M87.5 444.5V453.5M88.5 445.5V452.5M89.5 444.5V453.5M90.5 444.5V452.5M91.5 444.5V453.5M92.5 444.5V452.5M93.5 444.5V453.5M94.5 444.5V452.5M95.5 444.5V453.5M96.5 444.5V453.5M97.5 444.5V452.5M98.5 444.5V452.5M99.5 444.5V453.5M100.5 445.5V452.5M101.5 444.5V453.5M102.5 444.5V452.5M103.5 444.5V453.5M104.5 444.5V453.5M105.5 444.5V453.5M106.5 444.5V453.5M107.5 445.5V453.5M108.5 444.5V453.5M109.5 444.5V453.5M110.5 444.5V452.5M111.5 445.5V452.5M112.5 444.5V453.5M113.5 444.5V453.5M114.5 444.5V453.5M115.5 445.5V453.5M116.5 445.5V452.5M117.5 444.5V453.5M118.5 445.5V453.5M119.5 444.5V453.5M120.5 445.5V452.5M121.5 445.5V452.5M122.5 444.5V453.5M123.5 445.5V452.5M124.5 445.5V453.5M125.5 444.5V453.5M126.5 445.5V452.5M127.5 444.5V453.5M128.5 444.5V453.5M129.5 445.5V453.5M130.5 445.5V452.5M131.5 444.5V453.5M132.5 445.5V452.5M133.5 444.5V453.5M134.5 444.5V453.5M135.5 445.5V453.5M136.5 444.5V452.5M137.5 444.5V453.5M138.5 443.5V453.5M139.5 444.5V452.5M140.5 444.5V453.5M141.5 444.5V453.5M142.5 444.5V453.5M143.5 444.5V453.5M144.5 444.5V452.5M145.5 444.5V452.5M146.5 444.5V453.5M147.5 444.5V453.5M148.5 444.5V453.5M149.5 444.5V452.5M150.5 444.5V453.5M151.5 444.5V453.5M152.5 444.5V452.5M153.5 445.5V453.5M154.5 445.5V453.5M155.5 444.5V453.5M156.5 444.5V452.5M157.5 444.5V452.5M158.5 445.5V452.5M159.5 444.5V453.5M160.5 444.5V452.5M161.5 445.5V453.5M162.5 444.5V453.5M163.5 444.5V453.5M164.5 444.5V452.5M165.5 444.5V452.5M166.5 445.5V453.5M167.5 444.5V452.5M168.5 444.5V452.5M169.5 445.5V453.5M170.5 444.5V453.5M171.5 445.5V453.5M172.5 445.5V453.5M173.5 444.5V452.5M174.5 444.5V453.5M175.5 444.5V453.5M176.5 444.5V453.5M177.5 445.5V452.5M178.5 444.5V452.5M179.5 444.5V453.5M180.5 444.5V453.5M181.5 444.5V453.5M182.5 443.5V453.5M183.5 443.5V453.5M184.5 444.5V453.5M185.5 444.5V453.5M186.5 444.5V452.5M187.5 444.5V453.5M188.5 444.5V453.5M189.5 444.5V452.5M190.5 444.5V452.5M191.5 444.5V453.5M192.5 444.5V453.5M193.5 444.5V453.5M194.5 444.5V453.5M195.5 444.5V453.5M196.5 444.5V453.5M197.5 444.5V452.5M198.5 445.5V453.5M199.5 445.5V453.5M200.5 444.5V452.5M201.5 444.5V452.5M202.5 444.5V453.5M203.5 444.5V452.5M204.5 444.5V453.5M205.5 444.5V453.5M206.5 444.5V452.5M207.5 445.5V453.5M208.5 444.5V453.5M209.5 444.5V453.5M210.5 444.5V453.5M211.5 444.5V453.5M212.5 443.5V452.5M213.5 444.5V452.5M214.5 444.5V453.5M215.5 444.5V452.5M216.5 445.5V453.5M217.5 445.5V453.5M218.5 443.5V453.5M219.5 444.5V453.5M220.5 444.5V453.5M221.5 444.5V453.5M222.5 445.5V453.5M223.5 445.5V453.5M224.5 444.5V453.5M225.5 444.5V453.5M226.5 444.5V453.5M227.5 445.5V452.5M228.5 444.5V453.5M229.5 444.5V453.5M230.5 444.5V453.5M231.5 445.5V452.5M232.5 444.5V453.5M233.5 444.5V453.5M234.5 444.5V453.5M235.5 444.5V453.5M236.5 445.5V453.5M237.5 445.5V453.5M238.5 444.5V452.5M239.5 444.5V453.5M240.5 444.5V453.5M241.5 444.5V453.5M242.5 444.5V453.5M243.5 444.5V453.5M244.5 445.5V452.5M245.5 444.5V452.5M246.5 444.5V453.5M247.5 444.5V453.5M248.5 445.5V453.5M249.5 444.5V453.5M250.5 444.5V453.5M251.5 445.5V452.5M252.5 444.5V452.5M253.5 444.5V452.5M254.5 445.5V452.5M255.5 444.5V453.5M256.5 444.5V453.5M257.5 444.5V453.5M258.5 443.5V452.5M259.5 444.5V453.5M260.5 444.5V453.5M261.5 444.5V453.5M262.5 443.5V452.5M263.5 445.5V453.5M264.5 444.5V452.5M265.5 444.5V452.5M266.5 443.5V453.5M267.5 445.5V453.5M268.5 443.5V453.5M269.5 443.5V453.5M270.5 445.5V453.5M271.5 444.5V453.5M272.5 444.5V453.5M273.5 444.5V453.5M274.5 444.5V452.5M275.5 444.5V452.5M276.5 443.5V452.5M277.5 444.5V453.5M278.5 445.5V453.5M279.5 444.5V452.5M280.5 444.5V452.5M281.5 444.5V453.5M282.5 444.5V452.5M283.5 444.5V453.5M284.5 445.5V453.5M285.5 445.5V452.5M286.5 444.5V452.5M287.5 445.5V453.5M288.5 444.5V452.5M289.5 444.5V452.5M290.5 444.5V452.5M291.5 444.5V453.5M292.5 445.5V452.5M293.5 444.5V453.5M294.5 444.5V453.5M295.5 444.5V452.5M296.5 445.5V452.5M297.5 445.5V453.5M316.5 562.5V568M317.5 562V568.6M318.5 562.5V569.3M319.5 562.9V570.9M320.5 563.4V571.5M321.5 564.9V572.2M322.5 564.4V572.8M323.5 564.9V573.5M324.5 565.4V574.1M325.5 566.8V574.7M326.5 566.3V575.4M327.5 567.8V575M328.5 567.3V576.7M329.5 568.8V577.3M330.5 568.2V577.9M331.5 568.7V578.6M332.5 569.2V578.2M333.5 567.7V579.2M334.5 569.2V579.2M335.5 569.2V578.2M336.5 569.2V578.2M337.5 569.2V579.2M338.5 569.2V579.2M339.5 570.2V578.2M340.5 570.2V579.2M341.5 570.2V579.2M342.5 569.2V579.2M343.5 569.2V579.2M344.5 568.7V578.2M345.5 567.7V579.2M346.5 570.2V578.2M347.5 570.2V578.2M348.5 569.2V579.2M349.5 569.2V579.2M350.5 569.2V579.2M351.5 567.7V579.2M352.5 567.7V579.2M353.5 569.2V579.2M354.5 570.2V578.2M355.5 570.2V579.2M356.5 569.2V579.2M357.5 569.2V578.2M358.5 569.2V579.2M359.5 569.2V579.2M360.5 569.2V579.2M361.5 569.2V579.2M362.5 570.2V579.2M363.5 569.2V578.2M364.5 569.2V579.2M365.5 569.2V579.2M366.5 570.2V578.2M367.5 570.2V579.2M368.5 570.2V579.2M369.5 570.2V579.2M370.5 569.2V579.2M371.5 569.2V579.2M372.5 569.2V579.2M373.5 569.2V579.2M374.5 570.2V578.2M375.5 570.2V579.2M376.5 569.2V578.2M377.5 570.2V579.2M378.5 569.2V578.2M379.5 569.2V578.2M380.5 569.2V579.2M381.5 569.2V578.2M382.5 569.2V579.2M383.5 569.2V578.2M384.5 567.7V579.2M385.5 570.2V578.2M386.5 569.2V579.2M387.5 569.2V579.2M388.5 570.2V579.2M389.5 569.2V579.2M390.5 570.2V579.2M391.5 569.2V579.2M392.5 569.2V579.2M393.5 569.2V579.2M394.5 569.2V579.2M395.5 569.2V579.2M396.5 570.2V579.2M397.5 570.2V578.2M398.5 570.2V579.2M399.5 569.2V579.2M400.5 567.7V579.2M401.5 567.7V579.2M402.5 569.2V579.2M403.5 570.2V578.2M404.5 569.2V579.2M405.5 570.2V578.2M406.5 570.2V578.2M407.5 567.7V579.2M408.5 570.2V579.2M409.5 569.2V578.2M410.5 569.2V579.2M411.5 570.2V579.2M412.5 570.2V578.2M413.5 568.7V578.2M414.5 567.7V578.2M415.5 570.2V579.2M416.5 569.2V579.2M417.5 569.2V579.2M418.5 570.2V578.2M419.5 569.2V579.2M420.5 569.2V579.2M421.5 567.7V579.2M422.5 570.2V579.2M423.5 569.2V579.2M424.5 569.2V579.2M425.5 569.2V579.2M426.5 570.2V579.2M427.5 570.2V579.2M428.5 569.2V578.2M429.5 569.2V578.2M430.5 569.2V579.2M431.5 569.2V579.2M432.5 569.2V579.2M433.5 570.2V578.2M434.5 569.2V579.2M435.5 569.2V579.2M436.5 569.2V578.2M437.5 568.7V579.2M438.5 570.2V579.2M439.5 569.2V578.2M440.5 570.2V579.2M441.5 569.2V579.2M442.5 569.2V579.2M443.5 569.2V578.2M444.5 569.2V578.2M445.5 567.7V578.2M446.5 569.2V579.2M447.5 569.2V578.2M448.5 569.2V579.2M449.5 570.2V579.2M450.5 569.2V578.2M451.5 570.2V579.2M452.5 570.2V578.2M453.5 570.2V579.2M454.5 570.2V579.2M455.5 570.2V579.2M456.5 569.2V579.2M457.5 570.2V579.2M458.5 569.2V579.2M459.5 569.2V579.2M460.5 569.2V579.2M461.5 570.2V579.2M462.5 570.2V579.2M463.5 569.2V579.2M464.5 569.2V579.2M465.5 569.2V578.2M466.5 569.2V579.2M467.5 569.2V578.2M468.5 569.2V579.2M469.5 570.2V579.2M470.5 569.2V579.2M471.5 569.2V578.2M472.5 570.2V579.2M473.5 569.2V579.2M474.5 570.2V579.2M475.5 570.2V578.2M476.5 568.7V579.2M477.5 570.2V579.2M478.5 569.2V578.2M479.5 569.2V579.2M480.5 570.2V579.2M481.5 569.2V579.2M482.5 569.2V579.2M483.5 569.2V578.2M484.5 569.2V578.2M485.5 570.2V578.2M486.5 569.2V579.2M487.5 570.2V579.2M488.5 569.2V579.2M489.5 569.2V578.2M490.5 569.2V579.2M491.5 569.2V578.2M492.5 570.2V578.2M493.5 569.2V579.2M494.5 569.2V578.2M495.5 569.2V579.2M496.5 569.2V579.2M497.5 570.2V579.2M498.5 567.7V579.2M499.5 569.2V579.2M500.5 569.2V579.2M501.5 569.2V579.2M502.5 570.2V579.2M503.5 569.2V579.2M504.5 570.2V578.2M505.5 569.2V579.2M506.5 569.2V579.2M507.5 569.2V579.2M508.5 569.2V578.2M509.5 569.2V579.2M510.5 570.2V579.2M511.5 569.2V578.2M512.5 570.2V578.2M513.5 570.2V579.2M514.5 569.2V579.2M515.5 569.2V579.2M516.5 569.2V579.2M517.5 569.2V579.2M518.5 569.2V578.2M519.5 570.2V579.2M520.5 569.2V578.2M521.5 569.2V579.2M522.5 569.2V579.2M523.5 570.2V578.2M524.5 569.2V579.2M525.5 570.2V578.2M526.5 569.2V578.2M527.5 569.2V579.2M528.5 569.2V579.2M529.5 570.2V579.2M530.5 567.7V579.2M531.5 570.2V579.2M532.5 570.2V579.2M533.5 568.7V578.2M534.5 569.2V579.2M535.5 570.2V579.2M536.5 570.2V579.2M537.5 567.7V579.2M538.5 569.2V579.2M539.5 569.2V579.2M540.5 570.2V578.2M541.5 567.7V579.2M542.5 569.2V578.2M543.5 570.2V578.2M544.5 569.2V579.2M545.5 569.2V578.2M546.5 569.2V578.2M547.5 570.2V578.2M548.5 570.2V579.2M549.5 570.2V578.2M550.5 568.7V579.2M551.5 569.2V578.2M552.5 569.2V579.2M553.5 569.2V578.2M554.5 567.7V579.2M555.5 570.2V579.2M556.5 569.2V578.2M557.5 569.2V579.2M558.5 570.2V579.2M559.5 570.2V578.2M560.5 569.2V578.2M561.5 569.2V579.2M562.5 570.2V579.2M563.5 570.2V579.2M564.5 570.2V579.2M565.5 569.2V579.2M566.5 569.2V579.2M567.5 569.2V579.2M568.5 569.2V578.2M569.5 569.2V578.2M570.5 570.2V578.2M571.5 570.2V579.2M572.5 569.2V579.2M573.5 569.2V579.2M574.5 569.2V579.2M575.5 570.2V579.2M576.5 569.2V579.2M577.5 569.2V578.2M578.5 570.2V579.2M579.5 570.2V579.2M580.5 569.2V578.2M581.5 569.2V579.2M582.5 569.2V579.2M583.5 569.2V578.2M584.5 569.2V579.2M585.5 570.2V579.2M586.5 568.7V579.2M587.5 569.2V579.2M588.5 569.2V579.2M589.5 569.2V578.2M590.5 570.2V578.2M591.5 570.2V578.2M592.5 569.2V578.2M593.5 569.2V579.2M594.5 567.7V579.2M595.5 567.7V578.2M596.5 570.2V578.2M597.5 569.2V579.2M598.5 569.2V579.2M599.5 567.7V579.2M600.5 569.2V578.2M601.5 569.2V579.2M602.5 569.2V578.2M603.5 569.2V578.2M604.5 570.2V579.2M605.5 569.2V579.2M606.5 568.7V579.2M607.5 569.2V578.2M608.5 570.2V579.2M609.5 569.2V579.2M610.5 569.2V578.2M611.5 569.2V579.2M612.5 570.2V578.2M613.5 569.2V579.2M614.5 570.2V578.2M615.5 569.2V579.2M616.5 567.7V579.2M617.5 569.2V579.2M618.5 570.2V579.2M619.5 569.2V579.2M620.5 569.2V579.2M621.5 569.2V579.2M622.5 569.2V579.2M623.5 569.2V579.2M624.5 569.2V578.2M625.5 569.2V579.2M626.5 569.2V578.2M627.5 569.2V578.2M628.5 569.2V579.2M629.5 570.2V579.2M630.5 569.2V578.2M631.5 569.2V579.2M632.5 569.2V578.2M633.5 569.2V579.2M634.5 569.2V579.2M635.5 570.2V578.2M636.5 569.2V579.2M637.5 570.2V579.2M638.5 570.2V579.2M639.5 569.2V579.2M640.5 569.2V579.2M641.5 567.7V579.2M642.5 569.2V579.2M643.5 569.2V578.2M644.5 568.7V579.2M645.5 567.7V578.2M646.5 567.7V579.2M647.5 570.2V578.2M648.5 569.2V579.2M649.5 569.2V579.2M650.5 569.2V578.2M651.5 569.2V579.2M652.5 569.2V578.2M653.5 568.7V579.2M654.5 569.2V579.2M655.5 569.2V579.2M656.5 569.2V578.2M657.5 570.2V579.2M658.5 569.2V578.2M659.5 570.2V579.2M660.5 569.2V579.2M661.5 570.2V578.2M662.5 569.2V578.2M663.5 568.7V579.2M664.5 567.7V579.2M665.5 569.2V579.2M666.5 569.2V578.2M667.5 569.2V578.2M668.5 569.2V579.2M669.5 569.2V579.2M670.5 570.2V578.2M671.5 569.2V579.2M672.5 569.2V578.2M673.5 569.2V578.2M674.5 569.2V578.2M675.5 570.2V578.2M676.5 570.2V578.2M677.5 569.2V579.2M678.5 569.2V579.2M679.5 569.2V579.2M680.5 569.2V579.2M681.5 569.2V578.2M682.5 569.2V579.2M683.5 570.2V579.2M684.5 569.2V579.2M685.5 569.2V578.2M686.5 567.7V579.2M687.5 569.2V578.2M688.5 569.2V579.2M689.5 567.7V579.2M690.5 569.2V579.2M691.5 569.2V579.2M692.5 569.2V578.2M693.5 567.7V579.2M694.5 569.2V578.2M695.5 570.2V578.2M696.5 569.2V579.2M697.5 570.2V579.2M698.5 569.2V579.2M699.5 568.7V579.2M700.5 569.2V579.2M701.5 569.2V579.2M702.5 570.2V578.2M703.5 570.2V578.2M704.5 569.2V578.2M705.5 568.7V579.2M706.5 569.2V578.2M707.5 569.2V579.2M708.5 569.2V579.2M709.5 569.2V579.2M710.5 569.2V579.2M711.5 570.2V579.2M712.5 569.2V579.2M713.5 569.2V579.2M714.5 570.2V579.2M715.5 567.7V578.2M716.5 569.2V579.2M717.5 569.2V578.2M718.5 569.2V579.2M719.5 570.2V579.2M720.5 569.2V579.2M721.5 570.2V578.2M722.5 570.2V578.2M723.5 567.7V578.2M724.5 569.2V579.2M725.5 569.2V579.2M726.5 569.2V579.2M727.5 569.2V579.2M728.5 569.2V579.2M729.5 569.2V579.2M730.5 570.2V579.2M731.5 569.2V579.2M732.5 570.2V579.2M733.5 569.2V579.2M734.5 570.2V579.2M735.5 570.2V579.2M736.5 569.2V579.2M737.5 567.7V579.2M738.5 569.2V578.2M739.5 568.7V578.2M740.5 569.2V579.2M741.5 568.7V579.2M742.5 569.2V578.2M743.5 570.2V579.2M744.5 569.2V579.2M745.5 569.2V578.2M746.5 569.2V578.2M747.5 569.2V578.2M748.5 570.2V579.2M749.5 570.2V578.2M750.5 569.2V579.2M751.5 569.2V579.2M752.5 569.2V579.2M753.5 569.2V579.2M754.5 569.2V579.2M755.5 569.2V578.2M756.5 569.2V579.2M757.5 569.2V578.2M758.5 569.2V578.2M759.5 569.2V579.2M760.5 569.2V578.2M761.5 570.2V579.2M762.5 567.7V579.2M763.5 569.2V579.2M764.5 569.2V579.2M765.5 570.2V579.2M766.5 567.7V579.2M767.5 570.2V579.2M768.5 569.2V579.2M769.5 569.2V579.2M770.5 569.2V578.2M771.5 569.2V579.2M772.5 569.2V579.2M773.5 569.2V579.2M774.5 570.2V579.2M775.5 570.2V579.2M776.5 570.2V579.2M777.5 569.2V578.2M778.5 570.2V578.2M779.5 570.2V579.2M780.5 570.2V579.2M781.5 570.2V579.2M782.5 570.2V579.2M783.5 569.2V579.2M784.5 570.2V579.2M785.5 569.2V579.2M786.5 570.2V578.2M787.5 569.2V579.2M788.5 569.2V579.2M789.5 567.7V579.2M790.5 569.2V579.2M791.5 569.2V579.2M792.5 569.2V578.2M793.5 570.2V579.2M794.5 569.2V579.2M795.5 569.2V579.2M796.5 569.2V578.2M797.5 570.2V579.2M798.5 570.2V579.2M799.5 569.2V578.2M800.5 569.2V578.2M801.5 569.2V578.2M802.5 570.2V578.2M803.5 567.7V579.2M804.5 569.2V578.2M805.5 569.2V579.2M806.5 569.2V579.2M807.5 569.2V579.2M808.5 569.2V579.2M809.5 570.2V579.2M810.5 570.2V579.2M811.5 569.2V579.2M812.5 569.2V579.2M813.5 569.2V579.2M814.5 569.2V579.2M815.5 567.7V579.2M816.5 569.2V579.2M817.5 569.2V579.2M818.5 569.2V579.2M819.5 569.2V579.2M820.5 569.2V578.2M821.5 568.7V578.2M822.5 570.2V579.2M823.5 569.2V579.2M824.5 567.7V579.2M825.5 567.7V578.2M826.5 569.2V579.2M827.5 569.2V579.2M828.5 570.2V579.2M829.5 569.2V579.2M830.5 569.2V579.2M831.5 569.2V579.2M832.5 569.2V579.2M833.5 568.7V578.2M834.5 569.2V579.2M835.5 569.2V578.2M836.5 569.2V579.2M837.5 569.2V578.2M838.5 569.2V579.2M839.5 570.2V579.2M840.5 570.2V579.2M841.5 569.2V579.2M842.5 569.2V578.2M843.5 569.2V578.2M844.5 570.2V579.2M845.5 569.2V578.2M846.5 569.2V578.2M847.5 569.2V579.2M848.5 569.2V578.2M849.5 570.2V578.2M850.5 569.2V578.2M851.5 568.7V579.2M852.5 569.2V579.2M853.5 569.2V579.2M854.5 569.2V579.2M855.5 569.2V579.2M856.5 567.7V578.2M857.5 569.2V579.2M858.5 569.2V579.2M859.5 569.2V579.2M860.5 570.2V579.2M861.5 569.2V578.2M862.5 569.2V579.2M863.5 570.2V579.2M864.5 569.2V579.2M865.5 569.2V579.2M866.5 569.2V578.2M867.5 569.2V579.2M868.5 569.2V579.2M869.5 570.2V578.2M870.5 569.2V578.2M871.5 567.7V579.2M872.5 567.7V579.2M873.5 569.2V579.2M874.5 569.2V579.2M875.5 567.7V578.2M876.5 570.2V579.2M877.5 567.7V579.2M878.5 569.2V579.2M879.5 570.2V579.2M880.5 568.7V579.2M881.5 569.2V578.2M882.5 568.7V579.2M883.5 569.2V578.2M884.5 570.2V579.2M885.5 570.2V579.2M886.5 569.2V579.2M887.5 569.2V578.2M888.5 567.7V579.2M889.5 570.2V578.2M890.5 569.2V578.2M891.5 569.2V579.2M892.5 567.7V578.2M893.5 570.2V578.2M894.5 567.7V579.2M895.5 570.2V578.2M896.5 569.2V579.2M897.5 569.2V578.2M898.5 570.2V578.2M899.5 569.2V578.2M900.5 570.2V579.2M901.5 569.2V578.2M902.5 569.2V579.2M903.5 569.2V579.2M904.5 569.2V579.2M905.5 569.2V579.2M906.5 569.2V579.2M907.5 570.2V579.2M908.5 569.2V579.2M909.5 569.2V579.2M910.5 570.2V579.2M911.5 570.2V579.2M912.5 569.2V579.2M913.5 569.2V578.2M914.5 569.2V578.2M915.5 570.2V579.2M916.5 569.2V578.2M917.5 570.2V579.2M918.5 569.2V578.2M919.5 570.2V579.2M920.5 569.2V579.2M921.5 569.2V578.2M922.5 570.2V578.2M923.5 570.2V579.2M924.5 569.2V579.2M925.5 569.2V578.2M926.5 569.2V579.2M927.5 567.7V579.2M928.5 569.2V578.2M929.5 569.2V579.2M930.5 567.7V578.2M931.5 569.2V578.2M932.5 569.2V579.2M933.5 567.7V579.2M934.5 569.2V579.2M935.5 569.2V579.2M936.5 569.2V579.2M937.5 569.2V578.2M938.5 569.2V579.2M939.5 570.2V578.2M940.5 569.2V579.2M941.5 570.2V579.2M942.5 567.7V579.2M943.5 570.2V578.2M944.5 570.2V579.2M945.5 569.2V578.2M946.5 569.2V579.2M947.5 568.7V579.2M948.5 570.2V578.2M949.5 569.2V579.2M950.5 569.2V579.2M951.5 570.2V579.2M952.5 570.2V578.2M953.5 569.2V579.2M954.5 570.2V579.2M955.5 568.7V579.2M956.5 569.2V579.2M957.5 570.2V579.2M958.5 569.2V579.2M959.5 570.2V579.2M960.5 569.2V578.2M961.5 570.2V579.2M962.5 570.2V579.2M963.5 569.2V579.2M964.5 569.2V579.2M965.5 569.2V579.2M966.5 567.7V578.2M967.5 570.2V578.2M968.5 569.2V578.2M969.5 569.2V579.2" stroke="#ffff00" stroke-width="1.6" fill="none"/><path d="M295 447 C298 447 299.5 452 301 464 L304 490 L306 511 L309 545 C310.5 554 312 560 316 563" stroke="#ffff00" stroke-width="3.5" fill="none" stroke-linejoin="round"/>
<!-- label backgrounds -->
<rect x="21" y="261" width="45" height="17" fill="#000"/>
<rect x="21" y="566" width="43" height="15" fill="#000"/>
<!-- expansion triangle -->
<path d="M489.5 16.5H502L495.8 23Z" fill="#d8a418"/>
<!-- small T in record bar -->
<rect x="402.5" y="4.8" width="7.5" height="10.5" rx="3" fill="#1a1200" stroke="#e8c020" stroke-width="1.5"/><path d="M404.5 7.5H408 M406.2 7.5V13" stroke="#c8a020" stroke-width="1"/>
<!-- trigger T marker -->
<path d="M302.5 25L305 22.5H312L314.5 25V34L308.5 38L302.5 34Z" fill="#d8a418" stroke="#8a6010" stroke-width="0.8"/>
<path d="M305 25.5H312 M308.5 25.5V35" stroke="#2a1a00" stroke-width="2.2"/>
<!-- ch3 marker -->
<path d="M4.5 263H13L19 270.5L13 278.5H4.5Q2 278.5 2 276V265.5Q2 263 4.5 263Z" fill="#c018c0" stroke="#5a1a6a" stroke-width="1"/>
<!-- ch1 marker -->
<path d="M5 566H13L19.5 574L13 582.5H5Q2.5 582.5 2.5 580V568.5Q2.5 566 5 566Z" fill="#000" stroke="#e0d020" stroke-width="1.5"/>
<!-- trigger level arrow -->
<path d="M959 534L965 529V532H969V536H965V539Z" fill="#f0e000"/>
</svg>
<div class="t" style="left:23px;top:262px;color:#e8e8e8;letter-spacing:1.4px">VOUT</div>
<div class="t" style="left:23px;top:564px;color:#e8e8e8;letter-spacing:1.9px">IOUT</div>
<div class="t" style="left:3px;top:263px;width:14px;text-align:center;font-size:12px;color:#2a0a3a">3</div>
<div class="t" style="left:3px;top:566px;width:14px;text-align:center;font-size:12px;color:#f0e020">1</div>

<!-- status bar 1 -->
<div class="sb" style="left:20px;top:638px;width:527px;height:19.5px"></div>
<div class="t" style="left:26px;top:641.5px;width:24px;height:14px;border-radius:8px;background:#f5f500;color:#000;text-align:center;font-size:13px;line-height:14px">1</div>
<div class="t" style="left:65.5px;top:639.5px;color:#eee610;letter-spacing:1.9px">5.00 A</div>
<div class="t" style="left:123px;top:639.5px;color:#eee610">Ω</div>
<svg width="971" height="730"><path d="M138 645.5C139.5 645.5 140.5 651 142 650.5S144 646 145 648.5L147 653" stroke="#eee610" stroke-width="2" fill="none"/></svg>
<div class="t" style="left:289px;top:641px;width:25px;height:13.5px;border-radius:8px;background:#b010b0;color:#2a002a;text-align:center;font-size:13px;line-height:14px">3</div>
<div class="t" style="left:329.5px;top:639.5px;color:#a810a8;letter-spacing:1.9px">500mV</div>
<svg width="971" height="730"><path d="M387.5 650C389 644 391.5 643 393 647.5S396.5 653 398.5 646.5 M400 645.5C401.5 645.5 402.5 651 404 650.5S406 646 407 648.5L409.5 653" stroke="#a810a8" stroke-width="2" fill="none"/></svg>

<!-- status bar 2 -->
<div class="sb" style="left:553px;top:637.5px;width:141.5px;height:37px"></div>
<div class="t" style="left:560.5px;top:640px;color:#f0f0f0;letter-spacing:1.5px">100μs</div>
<div class="a" style="left:558px;top:658px;width:12px;height:12px;background:#d8a418;border-radius:3px"></div>
<svg width="971" height="730"><path d="M560.5 661H567.5 M564 661V669" stroke="#201400" stroke-width="1.5"/><path d="M571 664H578" stroke="#d8a418" stroke-width="1.5"/><path d="M576 661L579 664L576 667Z M581 660.5H589L585 665.5Z" fill="#d8a418"/></svg>
<div class="t" style="left:593px;top:655px;color:#e0b018;letter-spacing:1.4px">197.000μs</div>

<!-- status bar 3 -->
<div class="sb" style="left:700px;top:637.5px;width:102px;height:36.5px"></div>
<div class="t" style="left:707px;top:641px;color:#f0f0f0;letter-spacing:2.1px">100MS/s</div>
<div class="t" style="left:707px;top:656.5px;color:#e8e8e8;letter-spacing:1.5px">100k points</div>

<!-- status bar 4 -->
<div class="sb" style="left:808.5px;top:637.5px;width:162px;height:36.5px"></div>
<div class="t" style="left:838px;top:642px;width:24px;height:14px;border-radius:8px;background:#f5f500;color:#000;text-align:center;font-size:13px;line-height:14px">1</div>
<svg width="971" height="730"><path d="M874 643.5H879C881 643.5 881 652.5 883 652.5H886.5" stroke="#f0f0f0" stroke-width="2" fill="none"/></svg>
<div class="t" style="left:916.5px;top:639.5px;color:#f0f0f0;letter-spacing:2.1px">3.20 A</div>

<!-- buttons -->
<div class="btn" style="left:20px"></div>
<div class="bt" style="left:20px;top:689px;width:107px">Type</div>
<div class="hl" style="left:55.5px;top:707px;width:37px;height:15px">Edge</div>

<div class="btn" style="left:132px"></div>
<div class="bt" style="left:132px;top:689px;width:107px">Source</div>
<div class="t" style="left:174px;top:708px;width:25px;height:13px;border-radius:7px;background:#f5f500;color:#000;text-align:center;font-size:12px;line-height:13px">1</div>

<div class="btn" style="left:244px"></div>
<div class="bt" style="left:244px;top:689px;width:107px">Coupling</div>
<div class="hl" style="left:286px;top:707px;width:23px;height:15px">DC</div>

<div class="btn" style="left:356px"></div>
<div class="bt" style="left:357px;top:681.5px;width:107px">Slope</div>
<div class="a" style="left:414px;top:700px;width:45px;height:31px;background:#c9cde2;border-radius:4px"></div>
<svg width="971" height="730"><path d="M364 725.3H377L388 705.5H401.5" stroke="#14244c" stroke-width="2" fill="none"/><path d="M378.5 717.5L384.5 711.5L384.8 719Z" fill="#0a1030"/>
<path d="M418.5 705.5H430.5L442 725.3H455.5" stroke="#14244c" stroke-width="2" fill="none"/><path d="M432.5 713L439 716.5L438 709.5Z" fill="#0a1030"/></svg>

<div class="btn" style="left:468px"></div>
<div class="bt" style="left:468px;top:689px;width:107px">Level</div>
<div class="hl" style="left:497px;top:706.5px;width:50px;height:15.5px">3.20 A</div>

<div class="btn" style="left:692px"></div>
<div class="bt" style="left:692px;top:681px;width:107px">Mode</div>
<div class="hl" style="left:719px;top:698px;width:54.5px;height:14px;line-height:14px">Normal</div>
<div class="bt" style="left:692px;top:712px;width:107px;letter-spacing:0.9px">&amp; Holdoff</div>

<div class="sb" style="left:863.5px;top:694.5px;width:106px;height:34px"></div>
<div class="t" style="left:870px;top:697px;color:#f0f0f0;font-size:15px;letter-spacing:1.2px">28 Jun 2017</div>
<div class="t" style="left:870px;top:713px;color:#f0f0f0;font-size:15px;letter-spacing:1.75px">13:57:46</div>
</div></body></html>
